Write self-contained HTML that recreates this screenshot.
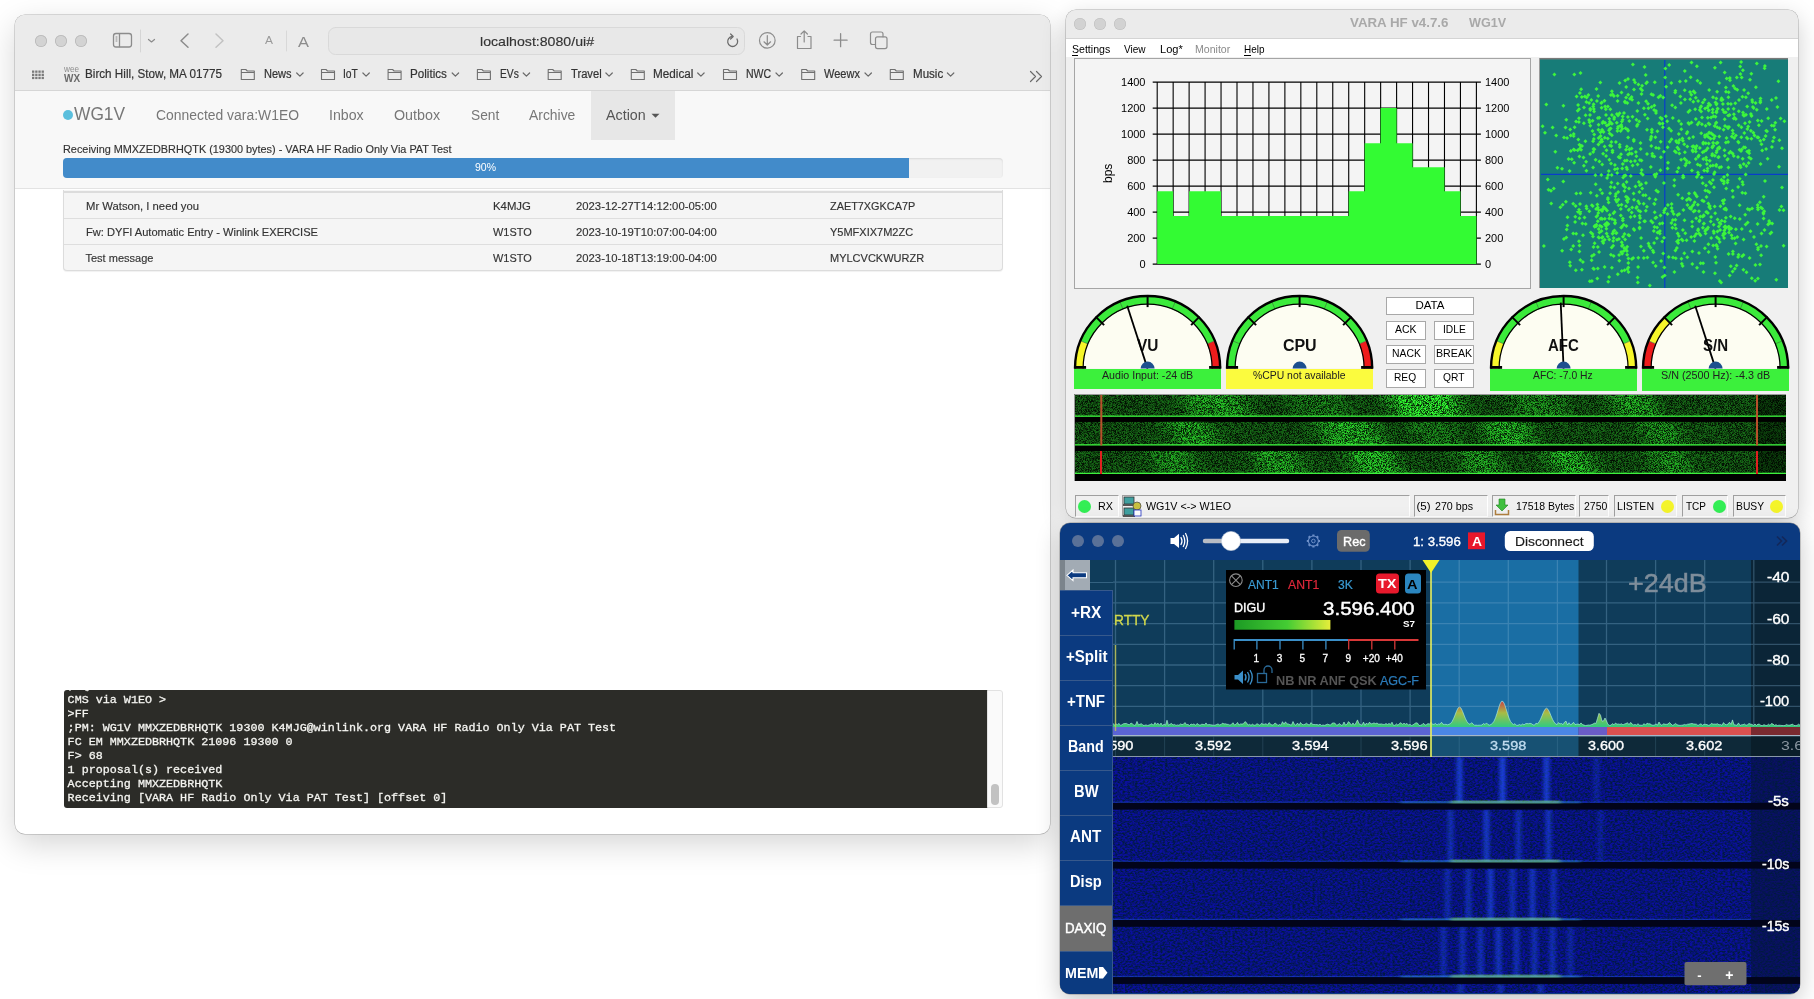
<!DOCTYPE html><html><head><meta charset="utf-8"><style>
html,body{margin:0;padding:0;width:1814px;height:999px;overflow:hidden;background:#fff;font-family:"Liberation Sans",sans-serif}
.b{position:absolute}
.t{position:absolute;white-space:pre;line-height:1;transform-origin:0 0}
</style></head><body><div style="position:absolute;left:0;top:0;width:1814px;height:999px;overflow:hidden;will-change:transform">

<div class="b" style="left:15px;top:14.5px;width:1035px;height:819.5px;border-radius:10px;background:#fff;box-shadow:0 0 0 0.5px rgba(0,0,0,.28),0 10px 32px rgba(0,0,0,.17);overflow:hidden">
</div>
<div class="b" style="left:15px;top:14.5px;width:1035px;height:76.5px;background:#ebebeb;border-radius:10px 10px 0 0;border-bottom:1px solid #d6d6d6;box-sizing:border-box"></div>
<div class="b" style="left:35px;top:35px;width:12px;height:12px;border-radius:50%;background:#d3d3d3;box-shadow:inset 0 0 0 0.8px #b8b8b8"></div>
<div class="b" style="left:55px;top:35px;width:12px;height:12px;border-radius:50%;background:#d3d3d3;box-shadow:inset 0 0 0 0.8px #b8b8b8"></div>
<div class="b" style="left:75px;top:35px;width:12px;height:12px;border-radius:50%;background:#d3d3d3;box-shadow:inset 0 0 0 0.8px #b8b8b8"></div>
<svg class="b" style="left:0;top:0" width="1050" height="90" fill="none" stroke="#8c8c8c" stroke-width="1.3" stroke-linecap="round" stroke-linejoin="round">
<rect x="113.5" y="33.5" width="18" height="13.5" rx="2.5"/>
<line x1="119.5" y1="34" x2="119.5" y2="46.5"/>
<line x1="116" y1="37" x2="117" y2="37" stroke-width="1"/><line x1="116" y1="39" x2="117" y2="39" stroke-width="1"/><line x1="116" y1="41" x2="117" y2="41" stroke-width="1"/>
<line x1="140.5" y1="30" x2="140.5" y2="52" stroke="#d5d5d5" stroke-width="1"/>
<path d="M148.5 39.5 L151.5 42 L154.5 39.5" stroke-width="1.2"/>
<path d="M188 34 L181 40.7 L188 47.3" stroke-width="1.5"/>
<path d="M216 34 L223 40.7 L216 47.3" stroke="#c2c2c2" stroke-width="1.5"/>
<line x1="286.5" y1="31" x2="286.5" y2="51" stroke="#d8d8d8" stroke-width="1"/>
<rect x="328.5" y="27.5" width="416" height="27" rx="7" fill="#e8e8e8" stroke="#d9d9d9" stroke-width="1"/>
<path d="M737 39 A5 5 0 1 1 732.2 36.5" stroke="#6b6b6b" stroke-width="1.3"/>
<path d="M730.6 34 L733.2 36.5 L730.6 39" stroke="#6b6b6b" stroke-width="1.2"/>
<circle cx="767.3" cy="40.4" r="7.8" stroke="#8c8c8c" stroke-width="1.2"/>
<path d="M767.3 35.5 V45 M764 41.8 L767.3 45 L770.6 41.8" stroke-width="1.2"/>
<path d="M800.5 36.5 H797.5 V48.5 H811 V36.5 H808" stroke-width="1.2"/>
<path d="M804.2 42 V30.8 M801 34 L804.2 30.8 L807.4 34" stroke-width="1.2"/>
<path d="M840.6 33.7 V46.7 M834.1 40.2 H847.1" stroke-width="1.3"/>
<rect x="875.5" y="36.8" width="11.5" height="11.8" rx="2" stroke-width="1.2"/>
<path d="M875.5 44.5 H872.5 Q870.5 44.5 870.5 42.5 V34 Q870.5 32 872.5 32 H881 Q883 32 883 34 V36.8" stroke-width="1.2"/>
</svg>
<span class="t" style="left:265.00px;top:35.07px;font-size:11.5px;color:#9a9a9a;transform:scaleX(1.0383);">A</span>
<span class="t" style="left:298.00px;top:33.68px;font-size:15.5px;color:#8c8c8c;transform:scaleX(1.0592);">A</span>
<span class="t" style="left:480.00px;top:34.60px;font-size:13px;color:#333;transform:scaleX(1.0880);-webkit-text-stroke:0.15px #333;">localhost:8080/ui#</span>
<svg class="b" style="left:0;top:0" width="1050" height="90" fill="#7a7a7a"><rect x="32.0" y="70.5" width="2.3" height="2.3"/><rect x="35.2" y="70.5" width="2.3" height="2.3"/><rect x="38.4" y="70.5" width="2.3" height="2.3"/><rect x="41.6" y="70.5" width="2.3" height="2.3"/><rect x="32.0" y="73.7" width="2.3" height="2.3"/><rect x="35.2" y="73.7" width="2.3" height="2.3"/><rect x="38.4" y="73.7" width="2.3" height="2.3"/><rect x="41.6" y="73.7" width="2.3" height="2.3"/><rect x="32.0" y="76.8" width="2.3" height="2.3"/><rect x="35.2" y="76.8" width="2.3" height="2.3"/><rect x="38.4" y="76.8" width="2.3" height="2.3"/><rect x="41.6" y="76.8" width="2.3" height="2.3"/></svg>
<span class="t" style="left:64.04px;top:65.40px;font-size:8.5px;color:#8c8c8c;transform:scaleX(0.9591);">wee</span>
<span class="t" style="left:64.00px;top:73.11px;font-size:10.5px;color:#6a6a6a;font-weight:bold;transform:scaleX(0.9465);">WX</span>
<span class="t" style="left:85.00px;top:68.04px;font-size:12px;color:#333;transform:scaleX(0.9733);-webkit-text-stroke:0.2px #333;">Birch Hill, Stow, MA 01775</span>
<svg class="b" style="left:0;top:0" width="1050" height="90" fill="none" stroke="#707070" stroke-width="1.1" stroke-linejoin="round"><path d="M241.3 69.5 H245.8 L247.3 71 H254.3 V79.5 H241.3 Z M241.3 72.5 H254.3"/><path d="M296.7 73 L299.9 76.2 L303.09999999999997 73" stroke="#6a6a6a" stroke-width="1.2" stroke-linecap="round"/><path d="M321.5 69.5 H326 L327.5 71 H334.5 V79.5 H321.5 Z M321.5 72.5 H334.5"/><path d="M362.9 73 L366.09999999999997 76.2 L369.29999999999995 73" stroke="#6a6a6a" stroke-width="1.2" stroke-linecap="round"/><path d="M388.1 69.5 H392.6 L394.1 71 H401.1 V79.5 H388.1 Z M388.1 72.5 H401.1"/><path d="M452.2 73 L455.4 76.2 L458.59999999999997 73" stroke="#6a6a6a" stroke-width="1.2" stroke-linecap="round"/><path d="M477.4 69.5 H481.9 L483.4 71 H490.4 V79.5 H477.4 Z M477.4 72.5 H490.4"/><path d="M523.2 73 L526.4000000000001 76.2 L529.6 73" stroke="#6a6a6a" stroke-width="1.2" stroke-linecap="round"/><path d="M548.2 69.5 H552.7 L554.2 71 H561.2 V79.5 H548.2 Z M548.2 72.5 H561.2"/><path d="M605.9 73 L609.1 76.2 L612.3 73" stroke="#6a6a6a" stroke-width="1.2" stroke-linecap="round"/><path d="M631.3 69.5 H635.8 L637.3 71 H644.3 V79.5 H631.3 Z M631.3 72.5 H644.3"/><path d="M697.7 73 L700.9000000000001 76.2 L704.1 73" stroke="#6a6a6a" stroke-width="1.2" stroke-linecap="round"/><path d="M723.5 69.5 H728 L729.5 71 H736.5 V79.5 H723.5 Z M723.5 72.5 H736.5"/><path d="M776 73 L779.2 76.2 L782.4 73" stroke="#6a6a6a" stroke-width="1.2" stroke-linecap="round"/><path d="M801.7 69.5 H806.2 L807.7 71 H814.7 V79.5 H801.7 Z M801.7 72.5 H814.7"/><path d="M865 73 L868.2 76.2 L871.4 73" stroke="#6a6a6a" stroke-width="1.2" stroke-linecap="round"/><path d="M890.3 69.5 H894.8 L896.3 71 H903.3 V79.5 H890.3 Z M890.3 72.5 H903.3"/><path d="M947.4 73 L950.6 76.2 L953.8 73" stroke="#6a6a6a" stroke-width="1.2" stroke-linecap="round"/><path d="M1030.5 71.5 L1035.5 76.5 L1030.5 81.5 M1036.5 71.5 L1041.5 76.5 L1036.5 81.5" stroke="#6a6a6a" stroke-width="1.2" stroke-linecap="round"/></svg>
<span class="t" style="left:263.60px;top:68.04px;font-size:12px;color:#333;transform:scaleX(0.9200);-webkit-text-stroke:0.2px #333;">News</span>
<span class="t" style="left:343.10px;top:68.04px;font-size:12px;color:#333;transform:scaleX(0.8593);-webkit-text-stroke:0.2px #333;">IoT</span>
<span class="t" style="left:410.30px;top:68.04px;font-size:12px;color:#333;transform:scaleX(0.9700);-webkit-text-stroke:0.2px #333;">Politics</span>
<span class="t" style="left:499.60px;top:68.04px;font-size:12px;color:#333;transform:scaleX(0.8538);-webkit-text-stroke:0.2px #333;">EVs</span>
<span class="t" style="left:570.90px;top:68.04px;font-size:12px;color:#333;transform:scaleX(0.9307);-webkit-text-stroke:0.2px #333;">Travel</span>
<span class="t" style="left:653.30px;top:68.04px;font-size:12px;color:#333;transform:scaleX(0.9773);-webkit-text-stroke:0.2px #333;">Medical</span>
<span class="t" style="left:745.80px;top:68.04px;font-size:12px;color:#333;transform:scaleX(0.8787);-webkit-text-stroke:0.2px #333;">NWC</span>
<span class="t" style="left:824.00px;top:68.04px;font-size:12px;color:#333;transform:scaleX(0.9177);-webkit-text-stroke:0.2px #333;">Weewx</span>
<span class="t" style="left:912.50px;top:68.04px;font-size:12px;color:#333;transform:scaleX(0.9642);-webkit-text-stroke:0.2px #333;">Music</span>
<div class="b" style="left:15px;top:91px;width:1035px;height:98px;background:#f8f8f8;border-bottom:1px solid #e3e3e3;box-sizing:border-box"></div>
<div class="b" style="left:591px;top:91px;width:84px;height:48.5px;background:#e7e7e7"></div>
<div class="b" style="left:63px;top:110.3px;width:10px;height:10px;border-radius:50%;background:#5bbfdd"></div>
<span class="t" style="left:73.90px;top:105.46px;font-size:18px;color:#777;transform:scaleX(0.9640);">WG1V</span>
<span class="t" style="left:155.70px;top:108.05px;font-size:14px;color:#777;transform:scaleX(0.9931);">Connected vara:W1EO</span>
<span class="t" style="left:329.30px;top:108.05px;font-size:14px;color:#777;transform:scaleX(1.0137);">Inbox</span>
<span class="t" style="left:394.40px;top:108.05px;font-size:14px;color:#777;transform:scaleX(1.0210);">Outbox</span>
<span class="t" style="left:470.90px;top:108.05px;font-size:14px;color:#777;transform:scaleX(0.9802);">Sent</span>
<span class="t" style="left:529.30px;top:108.05px;font-size:14px;color:#777;transform:scaleX(0.9916);">Archive</span>
<span class="t" style="left:605.80px;top:108.05px;font-size:14px;color:#555;transform:scaleX(1.0200);">Action</span>
<svg class="b" style="left:651px;top:113px" width="10" height="6"><path d="M0.5 0.8 H8.5 L4.5 4.8Z" fill="#555"/></svg>
<span class="t" style="left:62.50px;top:144.49px;font-size:11px;color:#333;transform:scaleX(0.9883);-webkit-text-stroke:0.15px #333;">Receiving MMXZEDBRHQTK (19300 bytes) - VARA HF Radio Only Via PAT Test</span>
<div class="b" style="left:63px;top:158.3px;width:940px;height:19.299999999999983px;background:#f1f1f1;border-radius:4px;box-shadow:inset 0 1px 2px rgba(0,0,0,.1)"></div>
<div class="b" style="left:63px;top:158.3px;width:846px;height:19.299999999999983px;background:#428bca;border-radius:4px 0 0 4px"></div>
<span class="t" style="left:474.50px;top:162.19px;font-size:11px;color:#fff;transform:scaleX(0.9545);">90%</span>
<div class="b" style="left:63px;top:190px;width:940px;height:81px;background:#f5f5f5;box-sizing:border-box;border:1px solid #dcdcdc;border-top:none;border-radius:0 0 4px 4px;box-shadow:0 1px 1px rgba(0,0,0,.06)"></div>
<div class="b" style="left:64px;top:190.5px;width:938px;height:2.0px;background:#dcdcdc"></div>
<div class="b" style="left:64px;top:218px;width:938px;height:1px;background:#dedede"></div>
<div class="b" style="left:64px;top:244px;width:938px;height:1px;background:#dedede"></div>
<span class="t" style="left:85.50px;top:200.99px;font-size:11px;color:#333;transform:scaleX(1.0247);-webkit-text-stroke:0.15px #333;">Mr Watson, I need you</span>
<span class="t" style="left:493.10px;top:200.99px;font-size:11px;color:#333;transform:scaleX(1.0331);-webkit-text-stroke:0.15px #333;">K4MJG</span>
<span class="t" style="left:575.70px;top:200.99px;font-size:11px;color:#333;transform:scaleX(1.0270);-webkit-text-stroke:0.15px #333;">2023-12-27T14:12:00-05:00</span>
<span class="t" style="left:830.00px;top:200.99px;font-size:11px;color:#333;transform:scaleX(0.9886);-webkit-text-stroke:0.15px #333;">ZAET7XGKCA7P</span>
<span class="t" style="left:85.50px;top:226.89px;font-size:11px;color:#333;transform:scaleX(1.0094);-webkit-text-stroke:0.15px #333;">Fw: DYFI Automatic Entry - Winlink EXERCISE</span>
<span class="t" style="left:493.10px;top:226.89px;font-size:11px;color:#333;transform:scaleX(0.9938);-webkit-text-stroke:0.15px #333;">W1STO</span>
<span class="t" style="left:575.70px;top:226.89px;font-size:11px;color:#333;transform:scaleX(1.0270);-webkit-text-stroke:0.15px #333;">2023-10-19T10:07:00-04:00</span>
<span class="t" style="left:830.00px;top:226.89px;font-size:11px;color:#333;-webkit-text-stroke:0.15px #333;">Y5MFXIX7M2ZC</span>
<span class="t" style="left:85.50px;top:253.09px;font-size:11px;color:#333;-webkit-text-stroke:0.15px #333;">Test message</span>
<span class="t" style="left:493.10px;top:253.09px;font-size:11px;color:#333;transform:scaleX(0.9938);-webkit-text-stroke:0.15px #333;">W1STO</span>
<span class="t" style="left:575.70px;top:253.09px;font-size:11px;color:#333;transform:scaleX(1.0270);-webkit-text-stroke:0.15px #333;">2023-10-18T13:19:00-04:00</span>
<span class="t" style="left:830.00px;top:253.09px;font-size:11px;color:#333;-webkit-text-stroke:0.15px #333;">MYLCVCKWURZR</span>
<div class="b" style="left:64px;top:690px;width:924px;height:118px;background:#2c2c28;border-radius:3px 0 0 3px"></div>
<div class="b" style="left:987px;top:690px;width:16px;height:118px;background:#fafafa;border:1px solid #e2e2e2;box-sizing:border-box;border-radius:0 3px 3px 0"></div>
<div class="b" style="left:991px;top:784px;width:8px;height:21px;background:#c2c2c2;border-radius:4px"></div>
<div class="b" style="left:64px;top:690px;width:923px;height:118px;overflow:hidden"><span class="t" style="left:3.60px;top:-9.28px;font-size:11.72px;color:#f4f4f0;font-family:'Liberation Mono',monospace;-webkit-text-stroke:0.3px #f4f4f0;">;PQ: 23753882</span><span class="t" style="left:3.60px;top:4.72px;font-size:11.72px;color:#f4f4f0;font-family:'Liberation Mono',monospace;-webkit-text-stroke:0.3px #f4f4f0;">CMS via W1EO &gt;</span><span class="t" style="left:3.60px;top:18.72px;font-size:11.72px;color:#f4f4f0;font-family:'Liberation Mono',monospace;-webkit-text-stroke:0.3px #f4f4f0;">&gt;FF</span><span class="t" style="left:3.60px;top:32.72px;font-size:11.72px;color:#f4f4f0;font-family:'Liberation Mono',monospace;-webkit-text-stroke:0.3px #f4f4f0;">;PM: WG1V MMXZEDBRHQTK 19300 K4MJG@winlink.org VARA HF Radio Only Via PAT Test</span><span class="t" style="left:3.60px;top:46.72px;font-size:11.72px;color:#f4f4f0;font-family:'Liberation Mono',monospace;-webkit-text-stroke:0.3px #f4f4f0;">FC EM MMXZEDBRHQTK 21096 19300 0</span><span class="t" style="left:3.60px;top:60.72px;font-size:11.72px;color:#f4f4f0;font-family:'Liberation Mono',monospace;-webkit-text-stroke:0.3px #f4f4f0;">F&gt; 68</span><span class="t" style="left:3.60px;top:74.72px;font-size:11.72px;color:#f4f4f0;font-family:'Liberation Mono',monospace;-webkit-text-stroke:0.3px #f4f4f0;">1 proposal(s) received</span><span class="t" style="left:3.60px;top:88.72px;font-size:11.72px;color:#f4f4f0;font-family:'Liberation Mono',monospace;-webkit-text-stroke:0.3px #f4f4f0;">Accepting MMXZEDBRHQTK</span><span class="t" style="left:3.60px;top:102.72px;font-size:11.72px;color:#f4f4f0;font-family:'Liberation Mono',monospace;-webkit-text-stroke:0.3px #f4f4f0;">Receiving [VARA HF Radio Only Via PAT Test] [offset 0]</span></div>
<div class="b" style="left:1066px;top:9.5px;width:732px;height:508px;border-radius:10px;background:#f0f0f0;box-shadow:0 0 0 0.5px rgba(0,0,0,.3),0 8px 24px rgba(0,0,0,.2);overflow:hidden"><div class="b" style="left:0;top:0;width:732px;height:28.5px;background:#ebebeb;border-bottom:1px solid #d4d4d4"></div><div class="b" style="left:0;top:29.5px;width:732px;height:18px;background:#fff"></div></div>
<div class="b" style="left:1074px;top:18px;width:12px;height:12px;border-radius:50%;background:#d2d2d2;box-shadow:inset 0 0 0 0.5px #bcbcbc"></div>
<div class="b" style="left:1094px;top:18px;width:12px;height:12px;border-radius:50%;background:#d2d2d2;box-shadow:inset 0 0 0 0.5px #bcbcbc"></div>
<div class="b" style="left:1114px;top:18px;width:12px;height:12px;border-radius:50%;background:#d2d2d2;box-shadow:inset 0 0 0 0.5px #bcbcbc"></div>
<span class="t" style="left:1349.60px;top:17.32px;font-size:12.5px;color:#a9a9a9;font-weight:bold;transform:scaleX(1.0652);">VARA HF v4.7.6</span>
<span class="t" style="left:1468.70px;top:17.32px;font-size:12.5px;color:#a9a9a9;font-weight:bold;transform:scaleX(1.0105);">WG1V</span>
<span class="t" style="left:1071.80px;top:43.79px;font-size:11px;color:#000;transform:scaleX(0.9606);">Settings</span>
<span class="t" style="left:1123.70px;top:43.79px;font-size:11px;color:#000;transform:scaleX(0.9133);">View</span>
<span class="t" style="left:1159.50px;top:43.79px;font-size:11px;color:#000;transform:scaleX(1.0062);">Log*</span>
<span class="t" style="left:1194.60px;top:43.79px;font-size:11px;color:#8a8a8a;transform:scaleX(0.9595);">Monitor</span>
<span class="t" style="left:1243.70px;top:43.79px;font-size:11px;color:#000;transform:scaleX(0.9025);">Help</span>
<div class="b" style="left:1072px;top:54.5px;width:6px;height:1.0px;background:#000"></div>
<div class="b" style="left:1244px;top:54.5px;width:7px;height:1.0px;background:#000"></div>
<div class="b" style="left:1074px;top:58px;width:457px;height:231px;background:#f4f4f4;border:1px solid #a5a5a5;box-sizing:border-box"></div>
<svg class="b" style="left:1074px;top:58px" width="457" height="231" viewBox="1074 58 457 231"><path d="M1157.20 82.1 V264.10 M1173.16 82.1 V264.10 M1189.12 82.1 V264.10 M1205.08 82.1 V264.10 M1221.04 82.1 V264.10 M1237.00 82.1 V264.10 M1252.96 82.1 V264.10 M1268.92 82.1 V264.10 M1284.88 82.1 V264.10 M1300.84 82.1 V264.10 M1316.80 82.1 V264.10 M1332.76 82.1 V264.10 M1348.72 82.1 V264.10 M1364.68 82.1 V264.10 M1380.64 82.1 V264.10 M1396.60 82.1 V264.10 M1412.56 82.1 V264.10 M1428.52 82.1 V264.10 M1444.48 82.1 V264.10 M1460.44 82.1 V264.10 M1476.40 82.1 V264.10 M1152.7 82.10 H1480.90 M1152.7 108.10 H1480.90 M1152.7 134.10 H1480.90 M1152.7 160.10 H1480.90 M1152.7 186.10 H1480.90 M1152.7 212.10 H1480.90 M1152.7 238.10 H1480.90 M1152.7 264.10 H1480.90 " stroke="#000" stroke-width="1.1" fill="none"/><path d="M1157.20 264.10 V191.30 H1173.16 V216.00 H1189.12 V191.30 H1205.08 V191.30 H1221.04 V216.00 H1237.00 V216.00 H1252.96 V216.00 H1268.92 V216.00 H1284.88 V216.00 H1300.84 V216.00 H1316.80 V216.00 H1332.76 V216.00 H1348.72 V191.30 H1364.68 V143.20 H1380.64 V108.10 H1396.60 V143.20 H1412.56 V167.25 H1428.52 V167.25 H1444.48 V191.30 H1460.44 V216.00 H1476.40 V264.10Z" fill="#33fb33"/></svg>
<span class="t" style="left:1121.03px;top:76.69px;font-size:11px;color:#000;">1400</span>
<span class="t" style="left:1485.00px;top:76.69px;font-size:11px;color:#000;">1400</span>
<span class="t" style="left:1121.03px;top:102.69px;font-size:11px;color:#000;">1200</span>
<span class="t" style="left:1485.00px;top:102.69px;font-size:11px;color:#000;">1200</span>
<span class="t" style="left:1121.03px;top:128.69px;font-size:11px;color:#000;">1000</span>
<span class="t" style="left:1485.00px;top:128.69px;font-size:11px;color:#000;">1000</span>
<span class="t" style="left:1127.13px;top:154.69px;font-size:11px;color:#000;">800</span>
<span class="t" style="left:1485.00px;top:154.69px;font-size:11px;color:#000;">800</span>
<span class="t" style="left:1127.13px;top:180.69px;font-size:11px;color:#000;">600</span>
<span class="t" style="left:1485.00px;top:180.69px;font-size:11px;color:#000;">600</span>
<span class="t" style="left:1127.13px;top:206.69px;font-size:11px;color:#000;">400</span>
<span class="t" style="left:1485.00px;top:206.69px;font-size:11px;color:#000;">400</span>
<span class="t" style="left:1127.13px;top:232.69px;font-size:11px;color:#000;">200</span>
<span class="t" style="left:1485.00px;top:232.69px;font-size:11px;color:#000;">200</span>
<span class="t" style="left:1139.39px;top:258.69px;font-size:11px;color:#000;">0</span>
<span class="t" style="left:1485.00px;top:258.69px;font-size:11px;color:#000;">0</span>
<span class="t" style="left:1101.70px;top:183.04px;font-size:12px;color:#000;transform:rotate(-90deg);transform-origin:0 0;">bps</span>
<svg class="b" style="left:1539px;top:58px" width="249" height="230"><rect x="0" y="0" width="249" height="230" fill="#177c78"/><path d="M0 0.8 H249" stroke="#7a7a7a" stroke-width="1.6"/><path d="M0.5 0 V230" stroke="#9a9a9a" stroke-width="1"/><path d="M125.8 2 V230 M2 116.4 H249" stroke="#0a3ccc" stroke-width="1.2"/><path d="M170.1 72.4l2 2l-2 2l-2-2zM14.8 128.6l2 2l-2 2l-2-2zM101.5 83.0l2 2l-2 2l-2-2zM63.5 63.0l2 2l-2 2l-2-2zM45.9 36.4l2 2l-2 2l-2-2zM94.7 169.1l2 2l-2 2l-2-2zM40.0 181.2l2 2l-2 2l-2-2zM210.0 90.7l2 2l-2 2l-2-2zM113.8 190.5l2 2l-2 2l-2-2zM35.6 67.3l2 2l-2 2l-2-2zM148.5 145.0l2 2l-2 2l-2-2zM191.0 20.2l2 2l-2 2l-2-2zM40.0 49.3l2 2l-2 2l-2-2zM88.2 186.8l2 2l-2 2l-2-2zM222.5 173.6l2 2l-2 2l-2-2zM163.8 123.2l2 2l-2 2l-2-2zM217.8 3.4l2 2l-2 2l-2-2zM222.5 84.3l2 2l-2 2l-2-2zM164.3 99.1l2 2l-2 2l-2-2zM204.9 55.8l2 2l-2 2l-2-2zM123.2 181.6l2 2l-2 2l-2-2zM18.4 107.8l2 2l-2 2l-2-2zM193.6 93.6l2 2l-2 2l-2-2zM203.9 10.3l2 2l-2 2l-2-2zM224.6 158.4l2 2l-2 2l-2-2zM189.1 82.1l2 2l-2 2l-2-2zM132.1 70.8l2 2l-2 2l-2-2zM70.3 179.4l2 2l-2 2l-2-2zM223.2 148.6l2 2l-2 2l-2-2zM117.3 130.6l2 2l-2 2l-2-2zM166.1 171.0l2 2l-2 2l-2-2zM210.5 149.8l2 2l-2 2l-2-2zM210.2 93.2l2 2l-2 2l-2-2zM38.7 50.7l2 2l-2 2l-2-2zM196.9 75.5l2 2l-2 2l-2-2zM126.4 8.6l2 2l-2 2l-2-2zM221.0 204.4l2 2l-2 2l-2-2zM164.7 163.7l2 2l-2 2l-2-2zM71.7 127.1l2 2l-2 2l-2-2zM95.0 139.8l2 2l-2 2l-2-2zM152.5 2.5l2 2l-2 2l-2-2zM169.8 43.6l2 2l-2 2l-2-2zM164.2 83.7l2 2l-2 2l-2-2zM136.4 30.7l2 2l-2 2l-2-2zM95.0 20.1l2 2l-2 2l-2-2zM44.9 63.2l2 2l-2 2l-2-2zM82.5 32.5l2 2l-2 2l-2-2zM4.9 186.1l2 2l-2 2l-2-2zM190.4 169.4l2 2l-2 2l-2-2zM159.2 96.7l2 2l-2 2l-2-2zM97.8 147.0l2 2l-2 2l-2-2zM119.5 37.3l2 2l-2 2l-2-2zM99.1 141.2l2 2l-2 2l-2-2zM116.7 206.0l2 2l-2 2l-2-2zM81.1 66.1l2 2l-2 2l-2-2zM145.9 39.5l2 2l-2 2l-2-2zM199.6 194.8l2 2l-2 2l-2-2zM89.0 18.9l2 2l-2 2l-2-2zM16.3 91.8l2 2l-2 2l-2-2zM73.5 92.2l2 2l-2 2l-2-2zM71.9 194.7l2 2l-2 2l-2-2zM98.3 50.9l2 2l-2 2l-2-2zM207.4 106.1l2 2l-2 2l-2-2zM67.8 65.5l2 2l-2 2l-2-2zM136.2 32.6l2 2l-2 2l-2-2zM100.9 99.9l2 2l-2 2l-2-2zM56.6 99.7l2 2l-2 2l-2-2zM185.7 59.3l2 2l-2 2l-2-2zM87.4 166.1l2 2l-2 2l-2-2zM149.8 138.5l2 2l-2 2l-2-2zM37.2 173.7l2 2l-2 2l-2-2zM157.9 6.2l2 2l-2 2l-2-2zM186.8 52.2l2 2l-2 2l-2-2zM62.6 166.7l2 2l-2 2l-2-2zM115.1 182.9l2 2l-2 2l-2-2zM115.1 49.9l2 2l-2 2l-2-2zM177.5 83.2l2 2l-2 2l-2-2zM177.5 52.6l2 2l-2 2l-2-2zM236.3 62.7l2 2l-2 2l-2-2zM105.3 161.2l2 2l-2 2l-2-2zM169.3 77.1l2 2l-2 2l-2-2zM159.8 95.6l2 2l-2 2l-2-2zM52.6 200.2l2 2l-2 2l-2-2zM128.2 61.3l2 2l-2 2l-2-2zM72.9 75.2l2 2l-2 2l-2-2zM75.9 105.0l2 2l-2 2l-2-2zM218.9 218.5l2 2l-2 2l-2-2zM186.8 168.1l2 2l-2 2l-2-2zM93.2 147.4l2 2l-2 2l-2-2zM77.9 54.1l2 2l-2 2l-2-2zM72.4 82.1l2 2l-2 2l-2-2zM106.0 161.2l2 2l-2 2l-2-2zM224.8 79.5l2 2l-2 2l-2-2zM72.3 85.9l2 2l-2 2l-2-2zM157.2 158.3l2 2l-2 2l-2-2zM170.6 121.9l2 2l-2 2l-2-2zM228.0 71.3l2 2l-2 2l-2-2zM74.7 196.1l2 2l-2 2l-2-2zM115.5 143.9l2 2l-2 2l-2-2zM206.0 63.3l2 2l-2 2l-2-2zM161.4 156.6l2 2l-2 2l-2-2zM119.8 88.3l2 2l-2 2l-2-2zM184.6 173.5l2 2l-2 2l-2-2zM139.1 134.7l2 2l-2 2l-2-2zM83.5 184.9l2 2l-2 2l-2-2zM55.6 183.3l2 2l-2 2l-2-2zM240.4 80.2l2 2l-2 2l-2-2zM85.3 188.0l2 2l-2 2l-2-2zM65.6 206.9l2 2l-2 2l-2-2zM121.9 97.3l2 2l-2 2l-2-2zM47.3 146.3l2 2l-2 2l-2-2zM168.9 152.9l2 2l-2 2l-2-2zM78.2 113.1l2 2l-2 2l-2-2zM168.6 108.5l2 2l-2 2l-2-2zM96.1 22.6l2 2l-2 2l-2-2zM221.5 38.6l2 2l-2 2l-2-2zM81.6 71.0l2 2l-2 2l-2-2zM153.5 90.2l2 2l-2 2l-2-2zM40.9 33.0l2 2l-2 2l-2-2zM233.2 163.6l2 2l-2 2l-2-2zM72.9 31.3l2 2l-2 2l-2-2zM78.8 214.3l2 2l-2 2l-2-2zM43.4 163.6l2 2l-2 2l-2-2zM182.4 119.7l2 2l-2 2l-2-2zM51.3 50.1l2 2l-2 2l-2-2zM188.7 67.3l2 2l-2 2l-2-2zM161.3 22.9l2 2l-2 2l-2-2zM143.9 170.1l2 2l-2 2l-2-2zM68.8 78.6l2 2l-2 2l-2-2zM174.8 78.4l2 2l-2 2l-2-2zM125.4 207.5l2 2l-2 2l-2-2zM58.9 58.0l2 2l-2 2l-2-2zM216.4 204.9l2 2l-2 2l-2-2zM171.3 44.9l2 2l-2 2l-2-2zM180.4 162.8l2 2l-2 2l-2-2zM136.4 190.4l2 2l-2 2l-2-2zM166.6 173.5l2 2l-2 2l-2-2zM165.1 91.5l2 2l-2 2l-2-2zM196.8 58.9l2 2l-2 2l-2-2zM73.6 173.8l2 2l-2 2l-2-2zM156.8 91.6l2 2l-2 2l-2-2zM175.9 76.3l2 2l-2 2l-2-2zM177.9 90.8l2 2l-2 2l-2-2zM185.7 12.6l2 2l-2 2l-2-2zM194.4 25.9l2 2l-2 2l-2-2zM121.7 81.8l2 2l-2 2l-2-2zM162.1 46.3l2 2l-2 2l-2-2zM89.1 94.6l2 2l-2 2l-2-2zM176.0 213.2l2 2l-2 2l-2-2zM163.2 140.6l2 2l-2 2l-2-2zM186.9 82.4l2 2l-2 2l-2-2zM41.4 151.8l2 2l-2 2l-2-2zM142.7 179.6l2 2l-2 2l-2-2zM91.8 101.6l2 2l-2 2l-2-2zM139.6 108.0l2 2l-2 2l-2-2zM73.7 34.4l2 2l-2 2l-2-2zM157.7 86.1l2 2l-2 2l-2-2zM129.0 102.7l2 2l-2 2l-2-2zM157.7 136.3l2 2l-2 2l-2-2zM200.5 89.8l2 2l-2 2l-2-2zM208.7 162.4l2 2l-2 2l-2-2zM177.9 177.3l2 2l-2 2l-2-2zM27.3 59.8l2 2l-2 2l-2-2zM169.5 63.6l2 2l-2 2l-2-2zM66.0 62.8l2 2l-2 2l-2-2zM151.2 39.3l2 2l-2 2l-2-2zM199.1 81.7l2 2l-2 2l-2-2zM70.1 217.1l2 2l-2 2l-2-2zM138.2 111.7l2 2l-2 2l-2-2zM170.6 64.2l2 2l-2 2l-2-2zM196.9 169.3l2 2l-2 2l-2-2zM175.7 112.3l2 2l-2 2l-2-2zM130.0 68.5l2 2l-2 2l-2-2zM169.3 143.6l2 2l-2 2l-2-2zM200.6 145.2l2 2l-2 2l-2-2zM180.4 88.2l2 2l-2 2l-2-2zM212.4 55.6l2 2l-2 2l-2-2zM6.0 72.8l2 2l-2 2l-2-2zM82.9 61.5l2 2l-2 2l-2-2zM31.8 91.1l2 2l-2 2l-2-2zM27.3 177.6l2 2l-2 2l-2-2zM206.4 133.2l2 2l-2 2l-2-2zM158.9 112.5l2 2l-2 2l-2-2zM163.9 167.7l2 2l-2 2l-2-2zM102.1 178.1l2 2l-2 2l-2-2zM35.1 102.7l2 2l-2 2l-2-2zM219.1 187.8l2 2l-2 2l-2-2zM41.2 153.7l2 2l-2 2l-2-2zM175.0 127.3l2 2l-2 2l-2-2zM197.8 17.5l2 2l-2 2l-2-2zM84.7 164.8l2 2l-2 2l-2-2zM77.6 172.9l2 2l-2 2l-2-2zM72.7 115.0l2 2l-2 2l-2-2zM229.8 163.6l2 2l-2 2l-2-2zM80.6 53.3l2 2l-2 2l-2-2zM194.8 95.9l2 2l-2 2l-2-2zM195.5 57.8l2 2l-2 2l-2-2zM156.2 49.2l2 2l-2 2l-2-2zM142.8 203.7l2 2l-2 2l-2-2zM59.6 77.9l2 2l-2 2l-2-2zM156.8 37.7l2 2l-2 2l-2-2zM241.6 58.4l2 2l-2 2l-2-2zM58.8 147.5l2 2l-2 2l-2-2zM96.9 92.0l2 2l-2 2l-2-2zM78.6 41.0l2 2l-2 2l-2-2zM142.4 198.7l2 2l-2 2l-2-2zM74.2 185.7l2 2l-2 2l-2-2zM104.2 135.3l2 2l-2 2l-2-2zM100.8 125.3l2 2l-2 2l-2-2zM17.2 75.5l2 2l-2 2l-2-2zM202.8 168.9l2 2l-2 2l-2-2zM104.7 143.8l2 2l-2 2l-2-2zM30.6 111.1l2 2l-2 2l-2-2zM185.0 117.1l2 2l-2 2l-2-2zM42.1 29.3l2 2l-2 2l-2-2zM205.3 73.0l2 2l-2 2l-2-2zM82.5 66.4l2 2l-2 2l-2-2zM87.1 37.5l2 2l-2 2l-2-2zM168.8 57.8l2 2l-2 2l-2-2zM63.1 159.1l2 2l-2 2l-2-2zM64.6 147.0l2 2l-2 2l-2-2zM54.1 81.2l2 2l-2 2l-2-2zM169.0 167.4l2 2l-2 2l-2-2zM124.2 193.5l2 2l-2 2l-2-2zM153.4 86.4l2 2l-2 2l-2-2zM100.3 143.5l2 2l-2 2l-2-2zM47.7 148.5l2 2l-2 2l-2-2zM112.9 70.1l2 2l-2 2l-2-2zM114.1 35.0l2 2l-2 2l-2-2zM63.2 81.4l2 2l-2 2l-2-2zM101.7 89.1l2 2l-2 2l-2-2zM125.7 215.4l2 2l-2 2l-2-2zM244.6 185.7l2 2l-2 2l-2-2zM213.4 42.0l2 2l-2 2l-2-2zM42.8 36.9l2 2l-2 2l-2-2zM82.7 182.2l2 2l-2 2l-2-2zM166.0 77.0l2 2l-2 2l-2-2zM112.3 76.6l2 2l-2 2l-2-2zM104.8 190.7l2 2l-2 2l-2-2zM169.4 184.3l2 2l-2 2l-2-2zM146.3 173.3l2 2l-2 2l-2-2zM47.4 42.0l2 2l-2 2l-2-2zM78.4 108.7l2 2l-2 2l-2-2zM189.4 37.3l2 2l-2 2l-2-2zM55.2 89.3l2 2l-2 2l-2-2zM193.6 70.5l2 2l-2 2l-2-2zM212.4 78.7l2 2l-2 2l-2-2zM189.1 68.3l2 2l-2 2l-2-2zM117.5 113.9l2 2l-2 2l-2-2zM158.5 20.8l2 2l-2 2l-2-2zM95.0 29.5l2 2l-2 2l-2-2zM158.7 104.6l2 2l-2 2l-2-2zM175.7 146.4l2 2l-2 2l-2-2zM141.9 43.0l2 2l-2 2l-2-2zM59.5 177.2l2 2l-2 2l-2-2zM161.4 47.5l2 2l-2 2l-2-2zM204.4 209.8l2 2l-2 2l-2-2zM54.6 44.3l2 2l-2 2l-2-2zM177.3 104.8l2 2l-2 2l-2-2zM67.6 173.6l2 2l-2 2l-2-2zM15.4 14.6l2 2l-2 2l-2-2zM177.4 44.5l2 2l-2 2l-2-2zM152.2 177.0l2 2l-2 2l-2-2zM31.2 69.5l2 2l-2 2l-2-2zM111.6 79.8l2 2l-2 2l-2-2zM139.9 60.9l2 2l-2 2l-2-2zM160.0 151.3l2 2l-2 2l-2-2zM226.0 120.9l2 2l-2 2l-2-2zM63.1 69.8l2 2l-2 2l-2-2zM54.0 176.4l2 2l-2 2l-2-2zM49.4 34.9l2 2l-2 2l-2-2zM147.8 140.0l2 2l-2 2l-2-2zM178.2 67.2l2 2l-2 2l-2-2zM54.8 79.1l2 2l-2 2l-2-2zM112.9 69.4l2 2l-2 2l-2-2zM41.8 85.8l2 2l-2 2l-2-2zM166.6 65.8l2 2l-2 2l-2-2zM73.0 159.0l2 2l-2 2l-2-2zM217.4 184.3l2 2l-2 2l-2-2zM97.9 65.9l2 2l-2 2l-2-2zM47.4 110.7l2 2l-2 2l-2-2zM173.9 105.6l2 2l-2 2l-2-2zM77.8 62.7l2 2l-2 2l-2-2zM189.2 48.9l2 2l-2 2l-2-2zM84.8 191.1l2 2l-2 2l-2-2zM110.4 138.4l2 2l-2 2l-2-2zM203.4 121.9l2 2l-2 2l-2-2zM95.6 156.2l2 2l-2 2l-2-2zM145.9 92.3l2 2l-2 2l-2-2zM88.6 69.5l2 2l-2 2l-2-2zM121.5 155.6l2 2l-2 2l-2-2zM102.5 100.4l2 2l-2 2l-2-2zM72.9 55.0l2 2l-2 2l-2-2zM201.4 14.1l2 2l-2 2l-2-2zM90.3 175.5l2 2l-2 2l-2-2zM132.5 79.3l2 2l-2 2l-2-2zM57.4 164.8l2 2l-2 2l-2-2zM60.1 191.9l2 2l-2 2l-2-2zM72.7 187.6l2 2l-2 2l-2-2zM182.9 120.6l2 2l-2 2l-2-2zM172.1 157.1l2 2l-2 2l-2-2zM128.6 87.2l2 2l-2 2l-2-2zM167.0 125.4l2 2l-2 2l-2-2zM51.0 54.9l2 2l-2 2l-2-2zM152.5 62.6l2 2l-2 2l-2-2zM65.8 77.8l2 2l-2 2l-2-2zM8.8 119.6l2 2l-2 2l-2-2zM173.3 87.5l2 2l-2 2l-2-2zM110.8 225.6l2 2l-2 2l-2-2zM85.1 115.8l2 2l-2 2l-2-2zM54.5 187.1l2 2l-2 2l-2-2zM138.4 87.4l2 2l-2 2l-2-2zM167.1 97.4l2 2l-2 2l-2-2zM117.3 157.6l2 2l-2 2l-2-2zM126.9 56.2l2 2l-2 2l-2-2zM41.0 143.9l2 2l-2 2l-2-2zM193.9 191.6l2 2l-2 2l-2-2zM202.0 91.0l2 2l-2 2l-2-2zM68.1 118.1l2 2l-2 2l-2-2zM122.9 58.6l2 2l-2 2l-2-2zM184.5 143.5l2 2l-2 2l-2-2zM201.0 105.4l2 2l-2 2l-2-2zM84.0 176.7l2 2l-2 2l-2-2zM159.0 170.5l2 2l-2 2l-2-2zM82.1 192.0l2 2l-2 2l-2-2zM29.6 98.9l2 2l-2 2l-2-2zM57.1 166.3l2 2l-2 2l-2-2zM203.9 124.5l2 2l-2 2l-2-2zM52.3 39.9l2 2l-2 2l-2-2zM168.1 152.2l2 2l-2 2l-2-2zM187.7 18.4l2 2l-2 2l-2-2zM94.6 133.5l2 2l-2 2l-2-2zM28.5 157.2l2 2l-2 2l-2-2zM79.2 132.1l2 2l-2 2l-2-2zM215.5 75.6l2 2l-2 2l-2-2zM59.6 64.7l2 2l-2 2l-2-2zM170.2 30.0l2 2l-2 2l-2-2zM114.1 202.6l2 2l-2 2l-2-2zM32.8 99.3l2 2l-2 2l-2-2zM58.4 144.4l2 2l-2 2l-2-2zM189.2 167.0l2 2l-2 2l-2-2zM164.7 155.2l2 2l-2 2l-2-2zM213.1 148.4l2 2l-2 2l-2-2zM55.7 166.8l2 2l-2 2l-2-2zM34.7 74.1l2 2l-2 2l-2-2zM47.1 101.7l2 2l-2 2l-2-2zM230.1 161.1l2 2l-2 2l-2-2zM36.8 210.2l2 2l-2 2l-2-2zM143.9 80.7l2 2l-2 2l-2-2zM123.4 163.2l2 2l-2 2l-2-2zM178.6 188.7l2 2l-2 2l-2-2zM138.0 181.6l2 2l-2 2l-2-2zM232.7 40.0l2 2l-2 2l-2-2zM105.5 6.9l2 2l-2 2l-2-2zM70.2 158.4l2 2l-2 2l-2-2zM117.0 52.9l2 2l-2 2l-2-2zM124.2 37.6l2 2l-2 2l-2-2zM63.6 177.1l2 2l-2 2l-2-2zM141.3 36.4l2 2l-2 2l-2-2zM89.3 207.4l2 2l-2 2l-2-2zM66.5 148.8l2 2l-2 2l-2-2zM23.1 190.7l2 2l-2 2l-2-2zM144.4 149.9l2 2l-2 2l-2-2zM74.2 181.0l2 2l-2 2l-2-2zM92.6 37.1l2 2l-2 2l-2-2zM194.0 137.1l2 2l-2 2l-2-2zM190.2 93.0l2 2l-2 2l-2-2zM37.6 36.5l2 2l-2 2l-2-2zM142.2 64.0l2 2l-2 2l-2-2zM81.1 97.7l2 2l-2 2l-2-2zM111.5 187.8l2 2l-2 2l-2-2zM184.8 123.6l2 2l-2 2l-2-2zM44.0 175.3l2 2l-2 2l-2-2zM58.3 218.4l2 2l-2 2l-2-2zM153.1 161.8l2 2l-2 2l-2-2zM146.8 21.1l2 2l-2 2l-2-2zM167.1 90.3l2 2l-2 2l-2-2zM42.1 89.8l2 2l-2 2l-2-2zM165.9 75.2l2 2l-2 2l-2-2zM89.2 34.7l2 2l-2 2l-2-2zM41.5 133.3l2 2l-2 2l-2-2zM116.4 77.2l2 2l-2 2l-2-2zM41.5 12.9l2 2l-2 2l-2-2zM216.6 43.1l2 2l-2 2l-2-2zM186.9 27.6l2 2l-2 2l-2-2zM181.1 169.9l2 2l-2 2l-2-2zM36.6 145.9l2 2l-2 2l-2-2zM65.8 158.8l2 2l-2 2l-2-2zM12.0 130.8l2 2l-2 2l-2-2zM208.4 69.1l2 2l-2 2l-2-2zM78.7 123.6l2 2l-2 2l-2-2zM78.0 179.7l2 2l-2 2l-2-2zM120.8 163.8l2 2l-2 2l-2-2zM76.9 81.9l2 2l-2 2l-2-2zM171.4 106.1l2 2l-2 2l-2-2zM204.0 52.6l2 2l-2 2l-2-2zM63.2 104.5l2 2l-2 2l-2-2zM146.3 105.4l2 2l-2 2l-2-2zM79.1 66.8l2 2l-2 2l-2-2zM55.0 208.9l2 2l-2 2l-2-2zM52.9 145.3l2 2l-2 2l-2-2zM170.1 146.9l2 2l-2 2l-2-2zM91.6 157.1l2 2l-2 2l-2-2zM136.8 198.2l2 2l-2 2l-2-2zM174.9 173.0l2 2l-2 2l-2-2zM198.3 29.7l2 2l-2 2l-2-2zM200.8 159.0l2 2l-2 2l-2-2zM124.9 123.0l2 2l-2 2l-2-2zM167.5 137.1l2 2l-2 2l-2-2zM216.2 220.7l2 2l-2 2l-2-2zM102.1 113.3l2 2l-2 2l-2-2zM128.5 153.9l2 2l-2 2l-2-2zM140.1 154.1l2 2l-2 2l-2-2zM193.6 211.5l2 2l-2 2l-2-2zM37.3 133.4l2 2l-2 2l-2-2zM214.6 47.9l2 2l-2 2l-2-2zM60.9 165.7l2 2l-2 2l-2-2zM182.2 107.0l2 2l-2 2l-2-2zM136.9 168.5l2 2l-2 2l-2-2zM80.7 84.7l2 2l-2 2l-2-2zM152.0 148.7l2 2l-2 2l-2-2zM175.8 95.7l2 2l-2 2l-2-2zM153.9 91.4l2 2l-2 2l-2-2zM70.7 73.4l2 2l-2 2l-2-2zM195.2 78.1l2 2l-2 2l-2-2zM173.9 120.1l2 2l-2 2l-2-2zM227.8 48.9l2 2l-2 2l-2-2zM89.5 139.0l2 2l-2 2l-2-2zM82.5 167.4l2 2l-2 2l-2-2zM118.1 167.4l2 2l-2 2l-2-2zM116.6 139.6l2 2l-2 2l-2-2zM64.3 182.9l2 2l-2 2l-2-2zM98.6 217.4l2 2l-2 2l-2-2zM199.7 65.3l2 2l-2 2l-2-2zM83.9 158.5l2 2l-2 2l-2-2zM72.0 103.6l2 2l-2 2l-2-2zM199.6 82.5l2 2l-2 2l-2-2zM62.2 43.0l2 2l-2 2l-2-2zM148.4 71.9l2 2l-2 2l-2-2zM156.4 87.8l2 2l-2 2l-2-2zM202.1 2.1l2 2l-2 2l-2-2zM69.6 142.4l2 2l-2 2l-2-2zM93.5 56.8l2 2l-2 2l-2-2zM154.3 41.8l2 2l-2 2l-2-2zM193.5 130.7l2 2l-2 2l-2-2zM152.9 110.4l2 2l-2 2l-2-2zM57.4 156.7l2 2l-2 2l-2-2zM53.5 173.9l2 2l-2 2l-2-2zM50.3 151.2l2 2l-2 2l-2-2zM46.7 163.9l2 2l-2 2l-2-2zM199.0 97.0l2 2l-2 2l-2-2zM81.8 149.0l2 2l-2 2l-2-2zM51.8 172.4l2 2l-2 2l-2-2zM94.8 81.1l2 2l-2 2l-2-2zM39.3 79.5l2 2l-2 2l-2-2zM132.4 163.1l2 2l-2 2l-2-2zM172.1 73.3l2 2l-2 2l-2-2zM174.5 85.7l2 2l-2 2l-2-2zM68.9 46.5l2 2l-2 2l-2-2zM112.4 34.2l2 2l-2 2l-2-2zM189.4 107.5l2 2l-2 2l-2-2zM77.2 173.3l2 2l-2 2l-2-2zM149.3 63.1l2 2l-2 2l-2-2zM204.6 179.5l2 2l-2 2l-2-2zM194.7 48.8l2 2l-2 2l-2-2zM120.8 173.4l2 2l-2 2l-2-2zM40.4 158.2l2 2l-2 2l-2-2zM59.4 84.6l2 2l-2 2l-2-2zM119.0 131.8l2 2l-2 2l-2-2zM212.5 56.1l2 2l-2 2l-2-2zM154.2 76.9l2 2l-2 2l-2-2zM87.0 89.7l2 2l-2 2l-2-2zM113.3 93.8l2 2l-2 2l-2-2zM115.5 167.1l2 2l-2 2l-2-2zM173.6 52.6l2 2l-2 2l-2-2zM89.1 70.8l2 2l-2 2l-2-2zM190.0 172.5l2 2l-2 2l-2-2zM85.0 53.0l2 2l-2 2l-2-2zM207.5 212.2l2 2l-2 2l-2-2zM143.3 138.3l2 2l-2 2l-2-2zM83.8 160.5l2 2l-2 2l-2-2zM129.7 197.0l2 2l-2 2l-2-2zM201.7 107.2l2 2l-2 2l-2-2zM209.2 33.2l2 2l-2 2l-2-2zM89.3 175.0l2 2l-2 2l-2-2zM191.8 206.3l2 2l-2 2l-2-2zM46.4 81.3l2 2l-2 2l-2-2zM201.2 6.4l2 2l-2 2l-2-2zM102.5 34.1l2 2l-2 2l-2-2zM160.8 50.1l2 2l-2 2l-2-2zM74.5 171.2l2 2l-2 2l-2-2zM63.0 177.7l2 2l-2 2l-2-2zM109.5 183.4l2 2l-2 2l-2-2zM85.5 174.0l2 2l-2 2l-2-2zM155.9 150.8l2 2l-2 2l-2-2zM96.5 126.4l2 2l-2 2l-2-2zM88.5 208.9l2 2l-2 2l-2-2zM151.3 139.7l2 2l-2 2l-2-2zM178.9 88.3l2 2l-2 2l-2-2zM206.6 164.6l2 2l-2 2l-2-2zM40.0 149.8l2 2l-2 2l-2-2zM162.8 117.6l2 2l-2 2l-2-2zM51.2 48.7l2 2l-2 2l-2-2zM88.4 137.4l2 2l-2 2l-2-2zM120.3 63.3l2 2l-2 2l-2-2zM58.8 187.1l2 2l-2 2l-2-2zM90.0 128.6l2 2l-2 2l-2-2zM188.4 114.9l2 2l-2 2l-2-2zM75.8 160.3l2 2l-2 2l-2-2zM88.5 142.1l2 2l-2 2l-2-2zM102.2 124.2l2 2l-2 2l-2-2zM169.6 192.1l2 2l-2 2l-2-2zM229.1 164.6l2 2l-2 2l-2-2zM159.2 169.2l2 2l-2 2l-2-2zM150.1 78.3l2 2l-2 2l-2-2zM85.9 41.4l2 2l-2 2l-2-2zM83.1 193.7l2 2l-2 2l-2-2zM112.0 78.1l2 2l-2 2l-2-2zM224.7 136.8l2 2l-2 2l-2-2zM155.4 181.1l2 2l-2 2l-2-2zM221.9 147.4l2 2l-2 2l-2-2zM43.0 86.1l2 2l-2 2l-2-2zM108.7 58.5l2 2l-2 2l-2-2zM159.4 114.5l2 2l-2 2l-2-2zM54.5 88.9l2 2l-2 2l-2-2zM58.8 161.2l2 2l-2 2l-2-2zM218.3 77.2l2 2l-2 2l-2-2zM121.4 57.8l2 2l-2 2l-2-2zM64.5 72.1l2 2l-2 2l-2-2zM34.2 143.8l2 2l-2 2l-2-2zM76.1 162.6l2 2l-2 2l-2-2zM62.5 170.9l2 2l-2 2l-2-2zM85.8 100.8l2 2l-2 2l-2-2zM149.3 52.0l2 2l-2 2l-2-2zM102.7 110.0l2 2l-2 2l-2-2zM89.1 77.6l2 2l-2 2l-2-2zM135.2 125.8l2 2l-2 2l-2-2zM57.5 29.0l2 2l-2 2l-2-2zM62.3 81.4l2 2l-2 2l-2-2zM225.6 8.2l2 2l-2 2l-2-2zM89.3 202.9l2 2l-2 2l-2-2zM79.6 97.0l2 2l-2 2l-2-2zM95.3 170.1l2 2l-2 2l-2-2zM96.0 101.1l2 2l-2 2l-2-2zM136.0 164.8l2 2l-2 2l-2-2zM157.2 174.0l2 2l-2 2l-2-2zM179.2 97.2l2 2l-2 2l-2-2zM50.8 221.3l2 2l-2 2l-2-2zM183.9 44.1l2 2l-2 2l-2-2zM61.3 81.9l2 2l-2 2l-2-2zM163.6 156.6l2 2l-2 2l-2-2zM168.4 168.9l2 2l-2 2l-2-2zM87.0 136.8l2 2l-2 2l-2-2zM82.9 186.0l2 2l-2 2l-2-2zM118.5 172.4l2 2l-2 2l-2-2zM178.6 82.7l2 2l-2 2l-2-2zM21.4 147.2l2 2l-2 2l-2-2zM206.7 114.4l2 2l-2 2l-2-2zM43.9 202.0l2 2l-2 2l-2-2zM167.5 100.1l2 2l-2 2l-2-2zM103.1 30.3l2 2l-2 2l-2-2zM152.5 146.9l2 2l-2 2l-2-2zM57.1 148.9l2 2l-2 2l-2-2zM50.1 59.9l2 2l-2 2l-2-2zM155.8 32.8l2 2l-2 2l-2-2zM167.7 74.8l2 2l-2 2l-2-2zM54.1 107.6l2 2l-2 2l-2-2zM46.6 55.2l2 2l-2 2l-2-2zM202.3 77.2l2 2l-2 2l-2-2zM108.4 197.5l2 2l-2 2l-2-2zM122.1 201.1l2 2l-2 2l-2-2zM87.0 188.9l2 2l-2 2l-2-2zM225.5 170.0l2 2l-2 2l-2-2zM209.2 66.4l2 2l-2 2l-2-2zM67.5 90.2l2 2l-2 2l-2-2zM38.7 90.3l2 2l-2 2l-2-2zM178.6 48.4l2 2l-2 2l-2-2zM23.0 108.7l2 2l-2 2l-2-2zM68.9 139.2l2 2l-2 2l-2-2zM191.7 156.5l2 2l-2 2l-2-2zM206.9 37.3l2 2l-2 2l-2-2zM70.2 58.7l2 2l-2 2l-2-2zM182.6 38.3l2 2l-2 2l-2-2zM63.2 133.2l2 2l-2 2l-2-2zM45.5 157.5l2 2l-2 2l-2-2zM220.9 142.2l2 2l-2 2l-2-2zM168.4 47.5l2 2l-2 2l-2-2zM74.5 153.2l2 2l-2 2l-2-2zM99.4 42.9l2 2l-2 2l-2-2zM73.8 173.2l2 2l-2 2l-2-2zM160.1 173.4l2 2l-2 2l-2-2zM209.6 103.1l2 2l-2 2l-2-2zM176.9 63.2l2 2l-2 2l-2-2zM204.3 55.1l2 2l-2 2l-2-2zM190.6 55.0l2 2l-2 2l-2-2zM63.1 151.1l2 2l-2 2l-2-2zM169.8 50.3l2 2l-2 2l-2-2zM185.3 149.1l2 2l-2 2l-2-2zM164.3 82.6l2 2l-2 2l-2-2zM68.8 176.6l2 2l-2 2l-2-2zM195.7 158.2l2 2l-2 2l-2-2zM154.6 151.6l2 2l-2 2l-2-2zM170.1 73.0l2 2l-2 2l-2-2zM177.3 38.6l2 2l-2 2l-2-2zM130.2 5.0l2 2l-2 2l-2-2zM183.6 39.7l2 2l-2 2l-2-2zM151.0 32.0l2 2l-2 2l-2-2zM223.2 90.6l2 2l-2 2l-2-2zM87.7 140.4l2 2l-2 2l-2-2zM113.4 96.0l2 2l-2 2l-2-2zM145.3 193.2l2 2l-2 2l-2-2zM179.9 179.1l2 2l-2 2l-2-2zM178.4 171.4l2 2l-2 2l-2-2zM211.9 54.1l2 2l-2 2l-2-2zM219.9 65.2l2 2l-2 2l-2-2zM66.8 49.3l2 2l-2 2l-2-2zM185.3 167.1l2 2l-2 2l-2-2zM195.8 208.7l2 2l-2 2l-2-2zM106.7 15.1l2 2l-2 2l-2-2zM168.3 111.0l2 2l-2 2l-2-2zM181.6 164.0l2 2l-2 2l-2-2zM71.7 68.4l2 2l-2 2l-2-2zM139.8 73.9l2 2l-2 2l-2-2zM244.5 150.2l2 2l-2 2l-2-2zM115.7 152.2l2 2l-2 2l-2-2zM53.7 145.9l2 2l-2 2l-2-2zM133.4 167.8l2 2l-2 2l-2-2zM134.7 154.1l2 2l-2 2l-2-2zM59.2 36.0l2 2l-2 2l-2-2zM57.9 41.1l2 2l-2 2l-2-2zM138.5 154.9l2 2l-2 2l-2-2zM192.5 175.3l2 2l-2 2l-2-2zM84.4 124.5l2 2l-2 2l-2-2zM50.6 61.9l2 2l-2 2l-2-2zM156.8 59.0l2 2l-2 2l-2-2zM101.7 28.8l2 2l-2 2l-2-2zM203.4 36.7l2 2l-2 2l-2-2zM28.1 78.1l2 2l-2 2l-2-2zM24.4 45.7l2 2l-2 2l-2-2zM75.5 151.9l2 2l-2 2l-2-2zM70.0 70.3l2 2l-2 2l-2-2zM58.8 208.6l2 2l-2 2l-2-2zM132.3 23.0l2 2l-2 2l-2-2zM99.1 207.0l2 2l-2 2l-2-2zM185.1 52.3l2 2l-2 2l-2-2zM176.2 153.3l2 2l-2 2l-2-2zM160.8 88.1l2 2l-2 2l-2-2zM115.3 45.4l2 2l-2 2l-2-2zM189.6 194.0l2 2l-2 2l-2-2zM187.0 31.7l2 2l-2 2l-2-2zM89.4 198.6l2 2l-2 2l-2-2zM199.1 127.0l2 2l-2 2l-2-2zM182.7 160.8l2 2l-2 2l-2-2zM142.3 69.3l2 2l-2 2l-2-2zM112.3 85.9l2 2l-2 2l-2-2zM224.4 152.7l2 2l-2 2l-2-2zM63.5 181.4l2 2l-2 2l-2-2zM87.6 122.1l2 2l-2 2l-2-2zM150.6 148.1l2 2l-2 2l-2-2zM218.6 163.9l2 2l-2 2l-2-2zM211.9 70.8l2 2l-2 2l-2-2zM71.3 49.3l2 2l-2 2l-2-2zM186.0 66.0l2 2l-2 2l-2-2zM80.5 23.0l2 2l-2 2l-2-2zM88.1 109.3l2 2l-2 2l-2-2zM62.8 42.4l2 2l-2 2l-2-2zM133.8 159.9l2 2l-2 2l-2-2zM153.3 204.1l2 2l-2 2l-2-2zM112.1 160.9l2 2l-2 2l-2-2zM86.1 179.5l2 2l-2 2l-2-2zM139.9 175.9l2 2l-2 2l-2-2zM163.0 57.4l2 2l-2 2l-2-2zM172.1 123.6l2 2l-2 2l-2-2zM213.9 46.9l2 2l-2 2l-2-2zM64.1 93.7l2 2l-2 2l-2-2zM224.5 153.7l2 2l-2 2l-2-2zM65.7 179.8l2 2l-2 2l-2-2zM180.1 23.0l2 2l-2 2l-2-2zM80.0 97.1l2 2l-2 2l-2-2zM103.2 128.6l2 2l-2 2l-2-2zM124.9 91.8l2 2l-2 2l-2-2zM202.4 67.2l2 2l-2 2l-2-2zM92.7 152.4l2 2l-2 2l-2-2zM159.1 41.0l2 2l-2 2l-2-2zM207.8 77.7l2 2l-2 2l-2-2zM54.2 46.5l2 2l-2 2l-2-2zM176.3 197.0l2 2l-2 2l-2-2zM109.4 48.3l2 2l-2 2l-2-2zM135.8 91.2l2 2l-2 2l-2-2zM192.8 76.4l2 2l-2 2l-2-2zM55.4 89.3l2 2l-2 2l-2-2zM154.7 31.3l2 2l-2 2l-2-2zM176.5 42.5l2 2l-2 2l-2-2zM182.1 40.1l2 2l-2 2l-2-2zM153.3 191.5l2 2l-2 2l-2-2zM177.1 106.0l2 2l-2 2l-2-2zM99.3 197.8l2 2l-2 2l-2-2zM217.8 49.7l2 2l-2 2l-2-2zM53.6 60.8l2 2l-2 2l-2-2zM101.3 151.5l2 2l-2 2l-2-2zM115.8 22.2l2 2l-2 2l-2-2zM44.9 105.7l2 2l-2 2l-2-2zM190.7 215.6l2 2l-2 2l-2-2zM70.9 61.8l2 2l-2 2l-2-2zM215.0 177.1l2 2l-2 2l-2-2zM218.8 147.6l2 2l-2 2l-2-2zM73.5 90.6l2 2l-2 2l-2-2zM180.2 87.2l2 2l-2 2l-2-2zM189.0 43.7l2 2l-2 2l-2-2zM112.8 72.3l2 2l-2 2l-2-2zM56.7 124.2l2 2l-2 2l-2-2zM121.4 35.7l2 2l-2 2l-2-2zM125.0 177.7l2 2l-2 2l-2-2zM162.2 73.2l2 2l-2 2l-2-2zM183.8 49.7l2 2l-2 2l-2-2zM88.9 57.1l2 2l-2 2l-2-2zM178.1 31.8l2 2l-2 2l-2-2zM139.7 89.2l2 2l-2 2l-2-2zM185.8 161.4l2 2l-2 2l-2-2zM86.2 20.6l2 2l-2 2l-2-2zM51.3 65.7l2 2l-2 2l-2-2zM176.5 56.7l2 2l-2 2l-2-2zM189.2 55.5l2 2l-2 2l-2-2zM175.6 66.0l2 2l-2 2l-2-2zM47.7 37.5l2 2l-2 2l-2-2zM115.3 96.6l2 2l-2 2l-2-2zM133.5 151.2l2 2l-2 2l-2-2zM71.0 85.6l2 2l-2 2l-2-2zM186.2 166.3l2 2l-2 2l-2-2zM92.6 88.4l2 2l-2 2l-2-2zM173.7 74.4l2 2l-2 2l-2-2zM132.6 148.1l2 2l-2 2l-2-2zM143.7 180.6l2 2l-2 2l-2-2zM154.6 86.3l2 2l-2 2l-2-2zM213.1 40.1l2 2l-2 2l-2-2zM56.4 115.3l2 2l-2 2l-2-2zM67.0 55.1l2 2l-2 2l-2-2zM40.9 88.5l2 2l-2 2l-2-2zM138.7 173.6l2 2l-2 2l-2-2zM136.4 159.8l2 2l-2 2l-2-2zM202.7 17.5l2 2l-2 2l-2-2zM170.5 132.3l2 2l-2 2l-2-2zM227.6 186.6l2 2l-2 2l-2-2zM69.2 221.7l2 2l-2 2l-2-2zM69.8 111.0l2 2l-2 2l-2-2zM36.3 156.7l2 2l-2 2l-2-2zM169.6 50.6l2 2l-2 2l-2-2zM140.9 21.5l2 2l-2 2l-2-2zM30.8 202.2l2 2l-2 2l-2-2zM137.0 92.3l2 2l-2 2l-2-2zM147.6 100.7l2 2l-2 2l-2-2zM164.8 141.2l2 2l-2 2l-2-2zM166.3 130.5l2 2l-2 2l-2-2zM178.8 48.8l2 2l-2 2l-2-2zM28.4 165.6l2 2l-2 2l-2-2zM185.3 140.0l2 2l-2 2l-2-2zM64.1 61.8l2 2l-2 2l-2-2zM68.9 138.1l2 2l-2 2l-2-2zM180.8 221.1l2 2l-2 2l-2-2zM87.0 146.3l2 2l-2 2l-2-2zM155.7 142.2l2 2l-2 2l-2-2zM67.4 168.8l2 2l-2 2l-2-2zM139.3 180.2l2 2l-2 2l-2-2zM182.1 222.6l2 2l-2 2l-2-2zM133.8 57.9l2 2l-2 2l-2-2zM163.8 42.5l2 2l-2 2l-2-2zM74.9 36.1l2 2l-2 2l-2-2zM218.7 144.9l2 2l-2 2l-2-2zM45.0 47.4l2 2l-2 2l-2-2zM147.6 180.3l2 2l-2 2l-2-2zM60.4 172.4l2 2l-2 2l-2-2zM71.9 35.0l2 2l-2 2l-2-2zM23.7 144.8l2 2l-2 2l-2-2zM228.6 98.7l2 2l-2 2l-2-2zM13.6 67.6l2 2l-2 2l-2-2zM117.9 178.3l2 2l-2 2l-2-2zM203.3 132.7l2 2l-2 2l-2-2zM234.9 65.7l2 2l-2 2l-2-2zM54.9 194.7l2 2l-2 2l-2-2zM98.6 64.6l2 2l-2 2l-2-2zM168.6 88.3l2 2l-2 2l-2-2zM145.5 160.2l2 2l-2 2l-2-2zM52.9 221.0l2 2l-2 2l-2-2zM172.2 177.9l2 2l-2 2l-2-2zM115.1 143.7l2 2l-2 2l-2-2zM99.5 150.4l2 2l-2 2l-2-2zM177.3 62.4l2 2l-2 2l-2-2zM128.9 145.1l2 2l-2 2l-2-2zM80.1 195.1l2 2l-2 2l-2-2zM87.2 27.1l2 2l-2 2l-2-2zM208.7 149.0l2 2l-2 2l-2-2zM99.8 121.9l2 2l-2 2l-2-2zM115.4 114.8l2 2l-2 2l-2-2zM227.2 70.8l2 2l-2 2l-2-2zM82.8 211.1l2 2l-2 2l-2-2zM160.0 62.5l2 2l-2 2l-2-2zM53.5 70.9l2 2l-2 2l-2-2zM34.7 89.6l2 2l-2 2l-2-2zM170.8 145.9l2 2l-2 2l-2-2zM130.7 81.7l2 2l-2 2l-2-2zM216.9 27.2l2 2l-2 2l-2-2zM97.2 148.0l2 2l-2 2l-2-2zM117.0 51.0l2 2l-2 2l-2-2zM101.1 157.9l2 2l-2 2l-2-2zM80.3 200.8l2 2l-2 2l-2-2zM25.0 77.5l2 2l-2 2l-2-2zM171.2 148.6l2 2l-2 2l-2-2zM166.1 48.6l2 2l-2 2l-2-2zM67.9 162.8l2 2l-2 2l-2-2zM185.5 90.3l2 2l-2 2l-2-2zM188.3 99.7l2 2l-2 2l-2-2zM114.8 170.9l2 2l-2 2l-2-2zM79.9 179.1l2 2l-2 2l-2-2zM191.4 91.8l2 2l-2 2l-2-2zM163.7 92.3l2 2l-2 2l-2-2zM91.8 116.1l2 2l-2 2l-2-2zM177.5 51.2l2 2l-2 2l-2-2zM65.9 164.4l2 2l-2 2l-2-2zM63.8 149.3l2 2l-2 2l-2-2zM145.5 98.8l2 2l-2 2l-2-2zM212.3 13.7l2 2l-2 2l-2-2zM186.0 173.5l2 2l-2 2l-2-2zM87.9 86.6l2 2l-2 2l-2-2zM55.6 166.1l2 2l-2 2l-2-2zM60.0 177.7l2 2l-2 2l-2-2zM245.4 61.3l2 2l-2 2l-2-2zM147.7 73.4l2 2l-2 2l-2-2zM169.4 45.7l2 2l-2 2l-2-2zM167.2 151.9l2 2l-2 2l-2-2zM62.6 47.8l2 2l-2 2l-2-2zM79.0 55.5l2 2l-2 2l-2-2zM219.4 77.4l2 2l-2 2l-2-2zM42.9 209.7l2 2l-2 2l-2-2zM231.3 173.4l2 2l-2 2l-2-2zM90.4 89.6l2 2l-2 2l-2-2zM80.8 87.1l2 2l-2 2l-2-2zM232.7 65.5l2 2l-2 2l-2-2zM123.9 67.3l2 2l-2 2l-2-2zM87.5 107.6l2 2l-2 2l-2-2zM219.0 189.4l2 2l-2 2l-2-2zM189.7 32.3l2 2l-2 2l-2-2zM175.0 114.0l2 2l-2 2l-2-2zM175.9 7.8l2 2l-2 2l-2-2zM40.4 191.5l2 2l-2 2l-2-2zM227.1 88.9l2 2l-2 2l-2-2zM180.4 107.6l2 2l-2 2l-2-2zM9.5 129.7l2 2l-2 2l-2-2zM57.8 135.8l2 2l-2 2l-2-2zM166.8 169.8l2 2l-2 2l-2-2zM178.6 159.6l2 2l-2 2l-2-2zM238.4 47.1l2 2l-2 2l-2-2zM155.6 176.3l2 2l-2 2l-2-2zM61.4 158.8l2 2l-2 2l-2-2zM158.9 144.8l2 2l-2 2l-2-2zM98.8 222.5l2 2l-2 2l-2-2zM211.9 98.7l2 2l-2 2l-2-2zM82.5 144.7l2 2l-2 2l-2-2zM206.2 154.7l2 2l-2 2l-2-2zM106.6 135.2l2 2l-2 2l-2-2zM100.4 162.6l2 2l-2 2l-2-2zM70.6 69.0l2 2l-2 2l-2-2zM105.9 54.8l2 2l-2 2l-2-2zM137.8 82.3l2 2l-2 2l-2-2zM237.0 37.9l2 2l-2 2l-2-2zM150.1 63.9l2 2l-2 2l-2-2zM148.3 197.2l2 2l-2 2l-2-2zM208.2 46.4l2 2l-2 2l-2-2zM232.9 87.0l2 2l-2 2l-2-2zM24.9 179.1l2 2l-2 2l-2-2zM100.6 168.4l2 2l-2 2l-2-2zM136.3 47.4l2 2l-2 2l-2-2zM39.1 45.1l2 2l-2 2l-2-2zM92.9 199.1l2 2l-2 2l-2-2zM167.9 104.0l2 2l-2 2l-2-2zM144.5 117.3l2 2l-2 2l-2-2zM225.2 151.2l2 2l-2 2l-2-2zM199.1 196.9l2 2l-2 2l-2-2zM90.1 149.5l2 2l-2 2l-2-2zM60.4 101.5l2 2l-2 2l-2-2zM107.2 23.3l2 2l-2 2l-2-2zM168.7 131.1l2 2l-2 2l-2-2zM126.2 17.5l2 2l-2 2l-2-2zM165.6 39.7l2 2l-2 2l-2-2zM187.2 128.6l2 2l-2 2l-2-2zM112.5 46.9l2 2l-2 2l-2-2zM182.6 39.9l2 2l-2 2l-2-2zM75.4 127.5l2 2l-2 2l-2-2zM173.1 95.5l2 2l-2 2l-2-2zM187.2 149.7l2 2l-2 2l-2-2zM233.9 81.3l2 2l-2 2l-2-2zM154.3 144.9l2 2l-2 2l-2-2zM83.7 56.6l2 2l-2 2l-2-2zM194.7 58.5l2 2l-2 2l-2-2zM78.6 35.7l2 2l-2 2l-2-2zM134.0 197.5l2 2l-2 2l-2-2zM173.7 49.6l2 2l-2 2l-2-2zM196.6 183.4l2 2l-2 2l-2-2zM76.0 163.4l2 2l-2 2l-2-2zM40.5 185.4l2 2l-2 2l-2-2zM204.7 104.0l2 2l-2 2l-2-2zM127.1 26.8l2 2l-2 2l-2-2zM210.6 197.9l2 2l-2 2l-2-2zM165.2 110.6l2 2l-2 2l-2-2zM199.8 51.3l2 2l-2 2l-2-2zM147.2 103.5l2 2l-2 2l-2-2zM88.3 43.1l2 2l-2 2l-2-2zM62.1 150.1l2 2l-2 2l-2-2zM218.8 60.5l2 2l-2 2l-2-2zM40.0 58.2l2 2l-2 2l-2-2zM157.9 136.4l2 2l-2 2l-2-2zM188.8 120.3l2 2l-2 2l-2-2zM103.8 114.7l2 2l-2 2l-2-2zM75.1 59.1l2 2l-2 2l-2-2zM123.5 217.1l2 2l-2 2l-2-2zM150.8 50.5l2 2l-2 2l-2-2zM145.8 10.9l2 2l-2 2l-2-2zM100.7 155.7l2 2l-2 2l-2-2zM152.3 34.8l2 2l-2 2l-2-2zM240.5 150.1l2 2l-2 2l-2-2zM166.8 83.3l2 2l-2 2l-2-2zM173.7 86.3l2 2l-2 2l-2-2zM83.2 108.4l2 2l-2 2l-2-2zM89.5 212.0l2 2l-2 2l-2-2zM221.3 42.5l2 2l-2 2l-2-2zM54.2 92.0l2 2l-2 2l-2-2zM150.0 133.6l2 2l-2 2l-2-2zM174.6 171.2l2 2l-2 2l-2-2zM67.1 166.0l2 2l-2 2l-2-2zM144.0 117.5l2 2l-2 2l-2-2zM165.0 163.5l2 2l-2 2l-2-2zM120.9 171.0l2 2l-2 2l-2-2zM50.6 62.2l2 2l-2 2l-2-2zM150.3 102.4l2 2l-2 2l-2-2zM155.7 133.1l2 2l-2 2l-2-2zM212.8 218.3l2 2l-2 2l-2-2zM187.5 77.9l2 2l-2 2l-2-2zM236.1 69.7l2 2l-2 2l-2-2zM77.8 141.8l2 2l-2 2l-2-2zM52.9 196.1l2 2l-2 2l-2-2zM185.8 95.8l2 2l-2 2l-2-2zM82.0 94.2l2 2l-2 2l-2-2zM60.3 57.7l2 2l-2 2l-2-2zM34.2 173.5l2 2l-2 2l-2-2zM133.1 45.3l2 2l-2 2l-2-2zM140.3 93.6l2 2l-2 2l-2-2zM61.3 129.7l2 2l-2 2l-2-2zM109.0 43.7l2 2l-2 2l-2-2zM93.9 4.6l2 2l-2 2l-2-2zM26.9 141.7l2 2l-2 2l-2-2zM76.9 134.0l2 2l-2 2l-2-2zM83.3 68.7l2 2l-2 2l-2-2zM75.3 57.2l2 2l-2 2l-2-2zM211.5 171.3l2 2l-2 2l-2-2zM181.6 2.4l2 2l-2 2l-2-2zM97.4 96.2l2 2l-2 2l-2-2zM100.2 61.6l2 2l-2 2l-2-2zM184.6 69.7l2 2l-2 2l-2-2zM61.3 22.5l2 2l-2 2l-2-2zM174.7 164.7l2 2l-2 2l-2-2zM87.9 100.5l2 2l-2 2l-2-2zM210.1 97.6l2 2l-2 2l-2-2zM116.3 157.9l2 2l-2 2l-2-2zM68.0 150.5l2 2l-2 2l-2-2zM94.8 79.7l2 2l-2 2l-2-2zM203.1 196.3l2 2l-2 2l-2-2zM190.0 66.9l2 2l-2 2l-2-2zM39.9 62.1l2 2l-2 2l-2-2zM221.4 41.1l2 2l-2 2l-2-2zM99.4 24.4l2 2l-2 2l-2-2zM93.1 39.8l2 2l-2 2l-2-2zM54.8 48.9l2 2l-2 2l-2-2zM177.4 92.6l2 2l-2 2l-2-2zM171.6 78.7l2 2l-2 2l-2-2zM222.6 61.0l2 2l-2 2l-2-2zM174.2 185.6l2 2l-2 2l-2-2zM156.8 99.1l2 2l-2 2l-2-2zM231.0 163.0l2 2l-2 2l-2-2zM84.4 125.7l2 2l-2 2l-2-2zM86.1 42.5l2 2l-2 2l-2-2zM192.3 168.6l2 2l-2 2l-2-2zM180.3 76.4l2 2l-2 2l-2-2zM107.9 146.7l2 2l-2 2l-2-2zM84.2 117.4l2 2l-2 2l-2-2zM59.7 168.9l2 2l-2 2l-2-2zM59.7 150.1l2 2l-2 2l-2-2zM178.0 186.3l2 2l-2 2l-2-2zM66.1 46.6l2 2l-2 2l-2-2zM154.5 31.6l2 2l-2 2l-2-2zM222.0 186.0l2 2l-2 2l-2-2zM62.7 79.5l2 2l-2 2l-2-2zM51.7 132.7l2 2l-2 2l-2-2zM184.0 175.2l2 2l-2 2l-2-2zM137.9 188.1l2 2l-2 2l-2-2zM200.0 40.0l2 2l-2 2l-2-2zM235.0 77.6l2 2l-2 2l-2-2zM108.0 22.3l2 2l-2 2l-2-2zM135.4 120.1l2 2l-2 2l-2-2zM98.6 104.5l2 2l-2 2l-2-2zM185.1 178.0l2 2l-2 2l-2-2zM40.4 96.6l2 2l-2 2l-2-2zM78.7 68.5l2 2l-2 2l-2-2zM41.3 199.9l2 2l-2 2l-2-2zM79.4 139.5l2 2l-2 2l-2-2zM162.9 64.2l2 2l-2 2l-2-2zM67.1 96.0l2 2l-2 2l-2-2zM35.3 14.4l2 2l-2 2l-2-2zM221.3 80.7l2 2l-2 2l-2-2zM170.8 100.8l2 2l-2 2l-2-2zM208.2 91.5l2 2l-2 2l-2-2zM148.3 86.5l2 2l-2 2l-2-2zM64.0 71.3l2 2l-2 2l-2-2zM70.4 99.8l2 2l-2 2l-2-2zM62.6 158.4l2 2l-2 2l-2-2zM72.4 122.5l2 2l-2 2l-2-2zM208.5 78.5l2 2l-2 2l-2-2zM37.1 61.4l2 2l-2 2l-2-2zM206.2 87.4l2 2l-2 2l-2-2zM181.4 146.3l2 2l-2 2l-2-2zM198.3 176.9l2 2l-2 2l-2-2zM243.0 127.4l2 2l-2 2l-2-2zM179.8 166.5l2 2l-2 2l-2-2zM70.7 155.1l2 2l-2 2l-2-2zM65.1 147.8l2 2l-2 2l-2-2zM128.6 108.5l2 2l-2 2l-2-2zM196.3 43.2l2 2l-2 2l-2-2zM108.0 69.8l2 2l-2 2l-2-2zM75.5 170.6l2 2l-2 2l-2-2zM191.9 44.0l2 2l-2 2l-2-2zM207.0 54.7l2 2l-2 2l-2-2zM51.1 93.9l2 2l-2 2l-2-2zM31.2 205.7l2 2l-2 2l-2-2zM162.1 51.5l2 2l-2 2l-2-2zM157.8 116.9l2 2l-2 2l-2-2zM229.2 58.2l2 2l-2 2l-2-2zM87.9 191.1l2 2l-2 2l-2-2zM76.7 139.7l2 2l-2 2l-2-2zM55.1 51.4l2 2l-2 2l-2-2zM132.6 143.9l2 2l-2 2l-2-2zM74.7 178.1l2 2l-2 2l-2-2zM81.8 155.5l2 2l-2 2l-2-2zM94.2 198.1l2 2l-2 2l-2-2zM177.0 202.7l2 2l-2 2l-2-2zM97.4 59.8l2 2l-2 2l-2-2zM243.0 88.3l2 2l-2 2l-2-2zM83.6 59.7l2 2l-2 2l-2-2zM40.4 84.7l2 2l-2 2l-2-2zM143.4 78.5l2 2l-2 2l-2-2zM139.6 82.7l2 2l-2 2l-2-2zM197.6 205.6l2 2l-2 2l-2-2zM111.8 107.1l2 2l-2 2l-2-2zM174.6 56.3l2 2l-2 2l-2-2zM151.7 17.3l2 2l-2 2l-2-2zM27.7 169.6l2 2l-2 2l-2-2zM126.4 148.4l2 2l-2 2l-2-2zM143.7 206.1l2 2l-2 2l-2-2zM242.4 146.5l2 2l-2 2l-2-2zM71.1 133.3l2 2l-2 2l-2-2zM193.1 178.2l2 2l-2 2l-2-2zM101.9 186.5l2 2l-2 2l-2-2zM156.6 134.6l2 2l-2 2l-2-2zM152.1 148.9l2 2l-2 2l-2-2zM193.9 194.1l2 2l-2 2l-2-2zM61.6 76.0l2 2l-2 2l-2-2zM145.7 30.2l2 2l-2 2l-2-2zM76.5 136.3l2 2l-2 2l-2-2zM196.1 28.5l2 2l-2 2l-2-2zM107.1 41.3l2 2l-2 2l-2-2zM232.4 172.5l2 2l-2 2l-2-2zM72.9 63.8l2 2l-2 2l-2-2zM69.2 115.0l2 2l-2 2l-2-2zM86.5 68.3l2 2l-2 2l-2-2zM90.5 88.9l2 2l-2 2l-2-2zM164.5 212.1l2 2l-2 2l-2-2zM190.0 166.8l2 2l-2 2l-2-2zM110.2 186.0l2 2l-2 2l-2-2zM190.8 18.0l2 2l-2 2l-2-2zM204.5 195.1l2 2l-2 2l-2-2zM91.0 38.8l2 2l-2 2l-2-2zM184.9 121.3l2 2l-2 2l-2-2zM194.1 73.5l2 2l-2 2l-2-2zM183.6 140.7l2 2l-2 2l-2-2zM58.3 155.7l2 2l-2 2l-2-2zM108.0 94.0l2 2l-2 2l-2-2zM36.1 162.1l2 2l-2 2l-2-2zM226.6 76.0l2 2l-2 2l-2-2zM85.6 210.3l2 2l-2 2l-2-2zM194.9 54.3l2 2l-2 2l-2-2zM185.3 170.5l2 2l-2 2l-2-2zM200.7 118.8l2 2l-2 2l-2-2zM158.0 207.8l2 2l-2 2l-2-2zM82.1 167.6l2 2l-2 2l-2-2zM93.6 105.4l2 2l-2 2l-2-2zM100.6 167.5l2 2l-2 2l-2-2zM125.1 152.6l2 2l-2 2l-2-2zM50.1 43.1l2 2l-2 2l-2-2zM86.1 127.3l2 2l-2 2l-2-2zM221.6 103.9l2 2l-2 2l-2-2zM125.2 150.6l2 2l-2 2l-2-2zM204.8 87.3l2 2l-2 2l-2-2zM31.7 75.6l2 2l-2 2l-2-2zM205.1 29.9l2 2l-2 2l-2-2zM160.6 160.2l2 2l-2 2l-2-2zM140.4 79.9l2 2l-2 2l-2-2zM65.5 40.7l2 2l-2 2l-2-2zM179.8 97.0l2 2l-2 2l-2-2zM135.4 212.1l2 2l-2 2l-2-2zM240.0 106.8l2 2l-2 2l-2-2zM180.7 182.0l2 2l-2 2l-2-2zM161.5 175.3l2 2l-2 2l-2-2zM104.9 48.2l2 2l-2 2l-2-2zM214.4 72.8l2 2l-2 2l-2-2zM54.3 208.6l2 2l-2 2l-2-2zM172.1 57.5l2 2l-2 2l-2-2zM69.8 64.4l2 2l-2 2l-2-2zM239.4 21.3l2 2l-2 2l-2-2zM211.0 19.7l2 2l-2 2l-2-2zM164.1 203.2l2 2l-2 2l-2-2zM75.9 109.3l2 2l-2 2l-2-2zM123.7 63.5l2 2l-2 2l-2-2zM72.9 207.7l2 2l-2 2l-2-2zM186.7 148.4l2 2l-2 2l-2-2zM144.1 115.8l2 2l-2 2l-2-2zM225.9 6.1l2 2l-2 2l-2-2zM106.8 150.8l2 2l-2 2l-2-2zM174.0 37.3l2 2l-2 2l-2-2zM121.4 110.2l2 2l-2 2l-2-2zM44.5 97.6l2 2l-2 2l-2-2zM188.8 99.1l2 2l-2 2l-2-2zM202.7 89.6l2 2l-2 2l-2-2zM165.9 188.3l2 2l-2 2l-2-2zM164.7 155.9l2 2l-2 2l-2-2zM69.3 164.0l2 2l-2 2l-2-2zM83.8 103.9l2 2l-2 2l-2-2zM34.7 76.0l2 2l-2 2l-2-2zM61.5 72.3l2 2l-2 2l-2-2zM222.1 195.2l2 2l-2 2l-2-2zM24.3 121.4l2 2l-2 2l-2-2zM142.1 99.7l2 2l-2 2l-2-2zM133.1 151.2l2 2l-2 2l-2-2zM38.9 151.8l2 2l-2 2l-2-2zM113.6 162.4l2 2l-2 2l-2-2zM118.4 71.3l2 2l-2 2l-2-2zM83.7 165.8l2 2l-2 2l-2-2zM92.8 93.7l2 2l-2 2l-2-2zM104.8 198.1l2 2l-2 2l-2-2zM145.2 84.3l2 2l-2 2l-2-2zM180.6 68.2l2 2l-2 2l-2-2zM177.6 43.6l2 2l-2 2l-2-2zM158.6 64.4l2 2l-2 2l-2-2zM122.8 59.0l2 2l-2 2l-2-2zM62.3 115.0l2 2l-2 2l-2-2zM186.9 157.8l2 2l-2 2l-2-2zM116.3 116.7l2 2l-2 2l-2-2zM169.7 83.6l2 2l-2 2l-2-2zM32.2 189.4l2 2l-2 2l-2-2zM90.7 93.4l2 2l-2 2l-2-2zM161.6 203.3l2 2l-2 2l-2-2zM203.7 98.7l2 2l-2 2l-2-2zM88.2 194.8l2 2l-2 2l-2-2zM153.2 166.6l2 2l-2 2l-2-2zM59.3 152.9l2 2l-2 2l-2-2zM117.0 87.8l2 2l-2 2l-2-2zM114.5 192.2l2 2l-2 2l-2-2zM161.2 105.4l2 2l-2 2l-2-2zM100.4 132.0l2 2l-2 2l-2-2zM103.1 25.8l2 2l-2 2l-2-2zM219.0 149.6l2 2l-2 2l-2-2zM90.3 61.0l2 2l-2 2l-2-2zM188.4 122.4l2 2l-2 2l-2-2zM79.5 145.2l2 2l-2 2l-2-2zM174.1 82.7l2 2l-2 2l-2-2zM85.4 131.1l2 2l-2 2l-2-2zM171.7 161.6l2 2l-2 2l-2-2zM195.5 178.3l2 2l-2 2l-2-2zM156.7 88.7l2 2l-2 2l-2-2zM173.3 93.9l2 2l-2 2l-2-2zM205.8 55.2l2 2l-2 2l-2-2zM86.5 115.4l2 2l-2 2l-2-2zM65.6 86.6l2 2l-2 2l-2-2zM237.3 219.7l2 2l-2 2l-2-2zM7.3 44.4l2 2l-2 2l-2-2zM55.2 74.6l2 2l-2 2l-2-2zM139.2 182.9l2 2l-2 2l-2-2zM82.3 65.1l2 2l-2 2l-2-2zM78.4 71.0l2 2l-2 2l-2-2zM59.4 69.8l2 2l-2 2l-2-2zM35.5 90.0l2 2l-2 2l-2-2zM210.6 62.0l2 2l-2 2l-2-2zM177.3 185.0l2 2l-2 2l-2-2zM107.0 122.9l2 2l-2 2l-2-2zM137.1 80.9l2 2l-2 2l-2-2zM12.2 143.5l2 2l-2 2l-2-2zM67.6 164.9l2 2l-2 2l-2-2zM160.3 161.2l2 2l-2 2l-2-2zM26.5 67.4l2 2l-2 2l-2-2zM3.6 66.3l2 2l-2 2l-2-2zM34.2 186.1l2 2l-2 2l-2-2zM160.0 193.0l2 2l-2 2l-2-2zM89.7 150.0l2 2l-2 2l-2-2zM121.0 63.7l2 2l-2 2l-2-2z" fill="#3cf53c"/></svg>
<div class="b" style="left:1074px;top:368.6px;width:147.20000000000005px;height:20.799999999999955px;background:#3cf03c"></div>
<svg class="b" style="left:1072px;top:290px" width="152" height="80" viewBox="1072 290 152 80"><path d="M1074.1 368.6 A73.5 73.5 0 0 1 1221.1 368.6Z" fill="#fdfdf2"/><path d="M1080.62 340.86 A72.5 72.5 0 0 0 1075.10 368.60 L1083.10 368.60 A64.5 64.5 0 0 1 1088.01 343.92Z" fill="#f6f62a"/><path d="M1214.58 340.86 A72.5 72.5 0 0 0 1080.62 340.86 L1088.01 343.92 A64.5 64.5 0 0 1 1207.19 343.92Z" fill="#3bea3b"/><path d="M1220.10 368.60 A72.5 72.5 0 0 0 1214.58 340.86 L1207.19 343.92 A64.5 64.5 0 0 1 1212.10 368.60Z" fill="#ee1c1c"/><line x1="1088.01" y1="343.92" x2="1080.62" y2="340.86" stroke="#3a6a3a" stroke-width="0.6"/><line x1="1122.92" y1="309.01" x2="1119.86" y2="301.62" stroke="#3a6a3a" stroke-width="0.6"/><line x1="1172.28" y1="309.01" x2="1175.34" y2="301.62" stroke="#3a6a3a" stroke-width="0.6"/><line x1="1207.19" y1="343.92" x2="1214.58" y2="340.86" stroke="#3a6a3a" stroke-width="0.6"/><path d="M1075.0 368.6 A72.6 72.6 0 0 1 1220.1999999999998 368.6" fill="none" stroke="#000" stroke-width="2.4"/><path d="M1083.1 368.6 A64.5 64.5 0 0 1 1212.1 368.6" fill="none" stroke="#000" stroke-width="1.2"/><line x1="1104.11" y1="325.11" x2="1095.63" y2="316.63" stroke="#000" stroke-width="2"/><line x1="1147.60" y1="307.10" x2="1147.60" y2="295.10" stroke="#000" stroke-width="2"/><line x1="1191.09" y1="325.11" x2="1199.57" y2="316.63" stroke="#000" stroke-width="2"/><rect x="1074.1" y="366.0" width="12" height="2.8" fill="#000"/><rect x="1209.1" y="366.0" width="12" height="2.8" fill="#000"/></svg>
<span class="t" style="left:1137.00px;top:337.66px;font-size:16px;color:#111;font-weight:bold;transform:scaleX(0.9622);">VU</span>
<svg class="b" style="left:1072px;top:290px" width="152" height="80" viewBox="1072 290 152 80"><line x1="1147.6" y1="368.6" x2="1127.20" y2="305.83" stroke="#000" stroke-width="1.8"/><path d="M1140.6 368.6 A7 7 0 0 1 1154.6 368.6Z" fill="#1d4f8e"/><line x1="1147.6" y1="368.6" x2="1145.44" y2="368.6" stroke="none"/></svg>
<span class="t" style="left:1102.00px;top:370.29px;font-size:11px;color:#202020;transform:scaleX(0.9686);">Audio Input: -24 dB</span>
<div class="b" style="left:1225.7px;top:368.6px;width:147.20000000000005px;height:20.799999999999955px;background:#fbfb3e"></div>
<svg class="b" style="left:1223.7px;top:290px" width="152" height="80" viewBox="1223.7 290 152 80"><path d="M1225.8 368.6 A73.5 73.5 0 0 1 1372.8 368.6Z" fill="#fdfdf2"/><path d="M1366.28 340.86 A72.5 72.5 0 0 0 1226.80 368.60 L1234.80 368.60 A64.5 64.5 0 0 1 1358.89 343.92Z" fill="#3bea3b"/><path d="M1371.80 368.60 A72.5 72.5 0 0 0 1366.28 340.86 L1358.89 343.92 A64.5 64.5 0 0 1 1363.80 368.60Z" fill="#ee1c1c"/><line x1="1239.71" y1="343.92" x2="1232.32" y2="340.86" stroke="#3a6a3a" stroke-width="0.6"/><line x1="1274.62" y1="309.01" x2="1271.56" y2="301.62" stroke="#3a6a3a" stroke-width="0.6"/><line x1="1323.98" y1="309.01" x2="1327.04" y2="301.62" stroke="#3a6a3a" stroke-width="0.6"/><line x1="1358.89" y1="343.92" x2="1366.28" y2="340.86" stroke="#3a6a3a" stroke-width="0.6"/><path d="M1226.7 368.6 A72.6 72.6 0 0 1 1371.8999999999999 368.6" fill="none" stroke="#000" stroke-width="2.4"/><path d="M1234.8 368.6 A64.5 64.5 0 0 1 1363.8 368.6" fill="none" stroke="#000" stroke-width="1.2"/><line x1="1255.81" y1="325.11" x2="1247.33" y2="316.63" stroke="#000" stroke-width="2"/><line x1="1299.30" y1="307.10" x2="1299.30" y2="295.10" stroke="#000" stroke-width="2"/><line x1="1342.79" y1="325.11" x2="1351.27" y2="316.63" stroke="#000" stroke-width="2"/><rect x="1225.8" y="366.0" width="12" height="2.8" fill="#000"/><rect x="1360.8" y="366.0" width="12" height="2.8" fill="#000"/></svg>
<span class="t" style="left:1282.90px;top:337.66px;font-size:16px;color:#111;font-weight:bold;">CPU</span>
<svg class="b" style="left:1223.7px;top:290px" width="152" height="80" viewBox="1223.7 290 152 80"><path d="M1292.3 368.6 A7 7 0 0 1 1306.3 368.6Z" fill="#1d4f8e"/></svg>
<span class="t" style="left:1253.40px;top:370.29px;font-size:11px;color:#202020;transform:scaleX(0.9454);">%CPU not available</span>
<div class="b" style="left:1490px;top:368.6px;width:147.20000000000005px;height:22.899999999999977px;background:#3cf03c"></div>
<svg class="b" style="left:1488px;top:290px" width="152" height="80" viewBox="1488 290 152 80"><path d="M1490.1 368.6 A73.5 73.5 0 0 1 1637.1 368.6Z" fill="#fdfdf2"/><path d="M1496.62 340.86 A72.5 72.5 0 0 0 1491.10 368.60 L1499.10 368.60 A64.5 64.5 0 0 1 1504.01 343.92Z" fill="#f6f62a"/><path d="M1630.58 340.86 A72.5 72.5 0 0 0 1496.62 340.86 L1504.01 343.92 A64.5 64.5 0 0 1 1623.19 343.92Z" fill="#3bea3b"/><path d="M1636.10 368.60 A72.5 72.5 0 0 0 1630.58 340.86 L1623.19 343.92 A64.5 64.5 0 0 1 1628.10 368.60Z" fill="#f6f62a"/><line x1="1504.01" y1="343.92" x2="1496.62" y2="340.86" stroke="#3a6a3a" stroke-width="0.6"/><line x1="1538.92" y1="309.01" x2="1535.86" y2="301.62" stroke="#3a6a3a" stroke-width="0.6"/><line x1="1588.28" y1="309.01" x2="1591.34" y2="301.62" stroke="#3a6a3a" stroke-width="0.6"/><line x1="1623.19" y1="343.92" x2="1630.58" y2="340.86" stroke="#3a6a3a" stroke-width="0.6"/><path d="M1491.0 368.6 A72.6 72.6 0 0 1 1636.1999999999998 368.6" fill="none" stroke="#000" stroke-width="2.4"/><path d="M1499.1 368.6 A64.5 64.5 0 0 1 1628.1 368.6" fill="none" stroke="#000" stroke-width="1.2"/><line x1="1520.11" y1="325.11" x2="1511.63" y2="316.63" stroke="#000" stroke-width="2"/><line x1="1563.60" y1="307.10" x2="1563.60" y2="295.10" stroke="#000" stroke-width="2"/><line x1="1607.09" y1="325.11" x2="1615.57" y2="316.63" stroke="#000" stroke-width="2"/><rect x="1490.1" y="366.0" width="12" height="2.8" fill="#000"/><rect x="1625.1" y="366.0" width="12" height="2.8" fill="#000"/></svg>
<span class="t" style="left:1547.90px;top:337.66px;font-size:16px;color:#111;font-weight:bold;transform:scaleX(0.9367);">AFC</span>
<svg class="b" style="left:1488px;top:290px" width="152" height="80" viewBox="1488 290 152 80"><line x1="1563.6" y1="368.6" x2="1560.72" y2="302.66" stroke="#000" stroke-width="1.8"/><path d="M1556.6 368.6 A7 7 0 0 1 1570.6 368.6Z" fill="#1d4f8e"/><line x1="1563.6" y1="368.6" x2="1563.29" y2="368.6" stroke="none"/></svg>
<span class="t" style="left:1533.40px;top:370.29px;font-size:11px;color:#202020;transform:scaleX(0.9374);">AFC: -7.0 Hz</span>
<div class="b" style="left:1641.8px;top:368.6px;width:147.20000000000005px;height:22.899999999999977px;background:#3cf03c"></div>
<svg class="b" style="left:1639.8px;top:290px" width="152" height="80" viewBox="1639.8 290 152 80"><path d="M1641.8999999999999 368.6 A73.5 73.5 0 0 1 1788.8999999999999 368.6Z" fill="#fdfdf2"/><path d="M1648.42 340.86 A72.5 72.5 0 0 0 1642.90 368.60 L1650.90 368.60 A64.5 64.5 0 0 1 1655.81 343.92Z" fill="#ee1c1c"/><path d="M1664.13 317.33 A72.5 72.5 0 0 0 1648.42 340.86 L1655.81 343.92 A64.5 64.5 0 0 1 1669.79 322.99Z" fill="#f6f62a"/><path d="M1787.90 368.60 A72.5 72.5 0 0 0 1664.13 317.33 L1669.79 322.99 A64.5 64.5 0 0 1 1779.90 368.60Z" fill="#3bea3b"/><line x1="1655.81" y1="343.92" x2="1648.42" y2="340.86" stroke="#3a6a3a" stroke-width="0.6"/><line x1="1690.72" y1="309.01" x2="1687.66" y2="301.62" stroke="#3a6a3a" stroke-width="0.6"/><line x1="1740.08" y1="309.01" x2="1743.14" y2="301.62" stroke="#3a6a3a" stroke-width="0.6"/><line x1="1774.99" y1="343.92" x2="1782.38" y2="340.86" stroke="#3a6a3a" stroke-width="0.6"/><path d="M1642.8 368.6 A72.6 72.6 0 0 1 1787.9999999999998 368.6" fill="none" stroke="#000" stroke-width="2.4"/><path d="M1650.8999999999999 368.6 A64.5 64.5 0 0 1 1779.8999999999999 368.6" fill="none" stroke="#000" stroke-width="1.2"/><line x1="1671.91" y1="325.11" x2="1663.43" y2="316.63" stroke="#000" stroke-width="2"/><line x1="1715.40" y1="307.10" x2="1715.40" y2="295.10" stroke="#000" stroke-width="2"/><line x1="1758.89" y1="325.11" x2="1767.37" y2="316.63" stroke="#000" stroke-width="2"/><rect x="1641.8999999999999" y="366.0" width="12" height="2.8" fill="#000"/><rect x="1776.8999999999999" y="366.0" width="12" height="2.8" fill="#000"/></svg>
<span class="t" style="left:1703.00px;top:337.66px;font-size:16px;color:#111;font-weight:bold;transform:scaleX(0.9384);">S/N</span>
<svg class="b" style="left:1639.8px;top:290px" width="152" height="80" viewBox="1639.8 290 152 80"><line x1="1715.3999999999999" y1="368.6" x2="1695.00" y2="305.83" stroke="#000" stroke-width="1.8"/><path d="M1708.3999999999999 368.6 A7 7 0 0 1 1722.3999999999999 368.6Z" fill="#1d4f8e"/><line x1="1715.3999999999999" y1="368.6" x2="1713.24" y2="368.6" stroke="none"/></svg>
<span class="t" style="left:1661.00px;top:370.29px;font-size:11px;color:#202020;transform:scaleX(0.9805);">S/N (2500 Hz): -4.3 dB</span>
<div class="b" style="left:1386px;top:297.3px;width:87.70000000000005px;height:18.19999999999999px;background:#fff;border:1px solid #a8a8a8;box-sizing:border-box"></div>
<span class="t" style="left:1415.50px;top:299.77px;font-size:11.5px;color:#000;">DATA</span>
<div class="b" style="left:1386px;top:321.3px;width:39.59999999999991px;height:18.30000000000001px;background:#fff;border:1px solid #a8a8a8;box-sizing:border-box"></div>
<span class="t" style="left:1394.90px;top:324.27px;font-size:11.5px;color:#000;transform:scaleX(0.9140);">ACK</span>
<div class="b" style="left:1434px;top:321.3px;width:39.700000000000045px;height:18.30000000000001px;background:#fff;border:1px solid #a8a8a8;box-sizing:border-box"></div>
<span class="t" style="left:1442.50px;top:324.27px;font-size:11.5px;color:#000;transform:scaleX(0.8911);">IDLE</span>
<div class="b" style="left:1386px;top:345.3px;width:39.59999999999991px;height:18.30000000000001px;background:#fff;border:1px solid #a8a8a8;box-sizing:border-box"></div>
<span class="t" style="left:1391.50px;top:348.27px;font-size:11.5px;color:#000;transform:scaleX(0.9040);">NACK</span>
<div class="b" style="left:1434px;top:345.3px;width:39.700000000000045px;height:18.30000000000001px;background:#fff;border:1px solid #a8a8a8;box-sizing:border-box"></div>
<span class="t" style="left:1436.40px;top:348.27px;font-size:11.5px;color:#000;transform:scaleX(0.9260);">BREAK</span>
<div class="b" style="left:1386px;top:369.4px;width:39.59999999999991px;height:18.200000000000045px;background:#fff;border:1px solid #a8a8a8;box-sizing:border-box"></div>
<span class="t" style="left:1394.40px;top:372.27px;font-size:11.5px;color:#000;transform:scaleX(0.8876);">REQ</span>
<div class="b" style="left:1434px;top:369.4px;width:39.700000000000045px;height:18.200000000000045px;background:#fff;border:1px solid #a8a8a8;box-sizing:border-box"></div>
<span class="t" style="left:1442.50px;top:372.27px;font-size:11.5px;color:#000;transform:scaleX(0.8924);">QRT</span>
<svg class="b" style="left:1074px;top:394px" width="712" height="87" viewBox="1074 394 712 87"><defs><filter id="vn" x="1074" y="394" width="712" height="87" filterUnits="userSpaceOnUse"><feTurbulence type="fractalNoise" baseFrequency="1.4" numOctaves="2" seed="3"/><feColorMatrix type="matrix" values="0 0 0 0 0  0 0 0 0 0  0 0 0 0 0  0 0 0 -3.4 2.15"/><feComposite operator="in" in2="SourceGraphic"/></filter><filter id="vb" x="-50%" y="-50%" width="200%" height="200%"><feGaussianBlur stdDeviation="9 3"/></filter></defs><rect x="1074" y="394" width="712" height="87" fill="#000"/><svg x="1074" y="394" width="712" height="22.80000000000001" viewBox="1074 394 712 22.80000000000001"><rect x="1074" y="394" width="712" height="22.80000000000001" fill="#176a17"/><rect x="1757" y="394" width="29" height="22.80000000000001" fill="#0c400c"/><rect x="1186" y="390" width="60" height="30.80000000000001" fill="#30ff30" opacity="0.60" filter="url(#vb)" transform="skewX(25) translate(-188.9 0)"/><rect x="1392" y="390" width="67" height="30.80000000000001" fill="#30ff30" opacity="1.00" filter="url(#vb)" transform="skewX(25) translate(-188.9 0)"/><rect x="1613" y="390" width="43" height="30.80000000000001" fill="#30ff30" opacity="0.60" filter="url(#vb)" transform="skewX(25) translate(-188.9 0)"/><rect x="1514" y="390" width="52" height="30.80000000000001" fill="#30ff30" opacity="0.40" filter="url(#vb)" transform="skewX(25) translate(-188.9 0)"/><rect x="1294" y="390" width="52" height="30.80000000000001" fill="#30ff30" opacity="0.30" filter="url(#vb)" transform="skewX(25) translate(-188.9 0)"/></svg><rect x="1074" y="394" width="712" height="22.80000000000001" fill="#000" filter="url(#vn)" opacity="0.85"/><rect x="1074" y="415.5" width="712" height="1.3" fill="#3ef03e"/><svg x="1074" y="421.8" width="712" height="23.69999999999999" viewBox="1074 421.8 712 23.69999999999999"><rect x="1074" y="421.8" width="712" height="23.69999999999999" fill="#176a17"/><rect x="1757" y="421.8" width="29" height="23.69999999999999" fill="#0c400c"/><rect x="1171" y="417.8" width="43" height="31.69999999999999" fill="#30ff30" opacity="0.60" filter="url(#vb)" transform="skewX(25) translate(-202.1 0)"/><rect x="1321" y="417.8" width="59" height="31.69999999999999" fill="#30ff30" opacity="0.70" filter="url(#vb)" transform="skewX(25) translate(-202.1 0)"/><rect x="1486" y="417.8" width="44" height="31.69999999999999" fill="#30ff30" opacity="0.70" filter="url(#vb)" transform="skewX(25) translate(-202.1 0)"/><rect x="1644" y="417.8" width="36" height="31.69999999999999" fill="#30ff30" opacity="0.50" filter="url(#vb)" transform="skewX(25) translate(-202.1 0)"/><rect x="1414" y="417.8" width="42" height="31.69999999999999" fill="#30ff30" opacity="0.30" filter="url(#vb)" transform="skewX(25) translate(-202.1 0)"/></svg><rect x="1074" y="421.8" width="712" height="23.69999999999999" fill="#000" filter="url(#vn)" opacity="0.85"/><rect x="1074" y="444.2" width="712" height="1.3" fill="#3ef03e"/><svg x="1074" y="451" width="712" height="23" viewBox="1074 451 712 23"><rect x="1074" y="451" width="712" height="23" fill="#176a17"/><rect x="1757" y="451" width="29" height="23" fill="#0c400c"/><rect x="1155" y="447" width="39" height="31" fill="#30ff30" opacity="0.50" filter="url(#vb)" transform="skewX(25) translate(-215.5 0)"/><rect x="1257" y="447" width="44" height="31" fill="#30ff30" opacity="0.60" filter="url(#vb)" transform="skewX(25) translate(-215.5 0)"/><rect x="1352" y="447" width="44" height="31" fill="#30ff30" opacity="0.80" filter="url(#vb)" transform="skewX(25) translate(-215.5 0)"/><rect x="1463" y="447" width="35" height="31" fill="#30ff30" opacity="0.60" filter="url(#vb)" transform="skewX(25) translate(-215.5 0)"/><rect x="1550" y="447" width="43" height="31" fill="#30ff30" opacity="0.70" filter="url(#vb)" transform="skewX(25) translate(-215.5 0)"/><rect x="1652" y="447" width="36" height="31" fill="#30ff30" opacity="0.50" filter="url(#vb)" transform="skewX(25) translate(-215.5 0)"/></svg><rect x="1074" y="451" width="712" height="23" fill="#000" filter="url(#vn)" opacity="0.85"/><rect x="1074" y="472.7" width="712" height="1.3" fill="#3ef03e"/><path d="M1101.3 394 V445.5 M1757 394 V445.5" stroke="#b8502c" stroke-width="2"/><path d="M1101 451 V474 M1757 451 V474" stroke="#e02020" stroke-width="2"/><path d="M1074.5 481 V394.5 H1786" stroke="#9a9a9a" stroke-width="1" fill="none"/></svg>
<div class="b" style="left:1074.5px;top:495px;width:44.09999999999991px;height:22.399999999999977px;border-top:1px solid #a0a0a0;border-left:1px solid #a0a0a0;border-right:1px solid #fff;border-bottom:1px solid #fff;box-sizing:border-box"></div>
<div class="b" style="left:1121.6px;top:495px;width:288.60000000000014px;height:22.399999999999977px;border-top:1px solid #a0a0a0;border-left:1px solid #a0a0a0;border-right:1px solid #fff;border-bottom:1px solid #fff;box-sizing:border-box"></div>
<div class="b" style="left:1413.6px;top:495px;width:74.0px;height:22.399999999999977px;border-top:1px solid #a0a0a0;border-left:1px solid #a0a0a0;border-right:1px solid #fff;border-bottom:1px solid #fff;box-sizing:border-box"></div>
<div class="b" style="left:1491.7px;top:495px;width:84.09999999999991px;height:22.399999999999977px;border-top:1px solid #a0a0a0;border-left:1px solid #a0a0a0;border-right:1px solid #fff;border-bottom:1px solid #fff;box-sizing:border-box"></div>
<div class="b" style="left:1579.4px;top:495px;width:30.0px;height:22.399999999999977px;border-top:1px solid #a0a0a0;border-left:1px solid #a0a0a0;border-right:1px solid #fff;border-bottom:1px solid #fff;box-sizing:border-box"></div>
<div class="b" style="left:1613.5px;top:495px;width:63.90000000000009px;height:22.399999999999977px;border-top:1px solid #a0a0a0;border-left:1px solid #a0a0a0;border-right:1px solid #fff;border-bottom:1px solid #fff;box-sizing:border-box"></div>
<div class="b" style="left:1681.5px;top:495px;width:46.799999999999955px;height:22.399999999999977px;border-top:1px solid #a0a0a0;border-left:1px solid #a0a0a0;border-right:1px solid #fff;border-bottom:1px solid #fff;box-sizing:border-box"></div>
<div class="b" style="left:1732.6px;top:495px;width:53.40000000000009px;height:22.399999999999977px;border-top:1px solid #a0a0a0;border-left:1px solid #a0a0a0;border-right:1px solid #fff;border-bottom:1px solid #fff;box-sizing:border-box"></div>
<div class="b" style="left:1077.8px;top:499.5px;width:13px;height:13px;border-radius:50%;background:#33ee55"></div>
<div class="b" style="left:1661.3px;top:499.5px;width:13px;height:13px;border-radius:50%;background:#f4f42a"></div>
<div class="b" style="left:1712.7px;top:499.5px;width:13px;height:13px;border-radius:50%;background:#33ee55"></div>
<div class="b" style="left:1770.3px;top:499.5px;width:13px;height:13px;border-radius:50%;background:#f4f42a"></div>
<span class="t" style="left:1098.30px;top:500.87px;font-size:11.5px;color:#000;transform:scaleX(0.9384);">RX</span>
<span class="t" style="left:1146.00px;top:500.87px;font-size:11.5px;color:#000;transform:scaleX(0.9303);">WG1V &lt;-&gt; W1EO</span>
<span class="t" style="left:1416.50px;top:500.87px;font-size:11.5px;color:#000;">(5)</span>
<span class="t" style="left:1435.20px;top:500.87px;font-size:11.5px;color:#000;transform:scaleX(0.9282);">270 bps</span>
<span class="t" style="left:1515.70px;top:500.87px;font-size:11.5px;color:#000;transform:scaleX(0.9118);">17518 Bytes</span>
<span class="t" style="left:1583.70px;top:500.87px;font-size:11.5px;color:#000;transform:scaleX(0.9106);">2750</span>
<span class="t" style="left:1617.30px;top:500.87px;font-size:11.5px;color:#000;transform:scaleX(0.9193);">LISTEN</span>
<span class="t" style="left:1685.50px;top:500.87px;font-size:11.5px;color:#000;transform:scaleX(0.8696);">TCP</span>
<span class="t" style="left:1735.50px;top:500.87px;font-size:11.5px;color:#000;transform:scaleX(0.8967);">BUSY</span>
<svg class="b" style="left:1120px;top:495px" width="400" height="23" viewBox="1120 495 400 23"><rect x="1124" y="497" width="10" height="7" fill="#40a0a0" stroke="#333" stroke-width="0.8"/><rect x="1124" y="508" width="10" height="7" fill="#40a0a0" stroke="#333" stroke-width="0.8"/><rect x="1123" y="504" width="12" height="2" fill="#555"/><rect x="1123" y="515" width="12" height="2" fill="#555"/><circle cx="1137" cy="506" r="4" fill="#c8c040" stroke="#444" stroke-width="0.7"/><rect x="1134" y="510" width="7" height="6" fill="#fff" stroke="#2030c0" stroke-width="0.8"/><path d="M1499 499 H1505 V505 H1508 L1502 511 L1496 505 H1499Z" fill="#40c040" stroke="#208020" stroke-width="0.6"/><path d="M1495.5 510 V514.5 H1508.5 V510" stroke="#b08040" stroke-width="1.5" fill="none"/></svg>
<div class="b" style="left:1059.5px;top:522.5px;width:740.5px;height:471.0px;border-radius:10px;background:#0b3a80;box-shadow:0 0 0 0.5px rgba(0,0,0,.35),0 8px 24px rgba(0,0,0,.22);overflow:hidden">
<div class="b" style="left:-1059.5px;top:-522.5px;width:1814px;height:999px">
<div class="b" style="left:1072.2px;top:535px;width:12px;height:12px;border-radius:50%;background:#5a7198"></div>
<div class="b" style="left:1092.2px;top:535px;width:12px;height:12px;border-radius:50%;background:#5a7198"></div>
<div class="b" style="left:1112.2px;top:535px;width:12px;height:12px;border-radius:50%;background:#5a7198"></div>
<svg class="b" style="left:1160px;top:525px" width="640" height="34" viewBox="1160 525 640 34"><path d="M1170.5 538 H1174 L1179 533.8 V548 L1174 544 H1170.5Z" fill="#fff"/><path d="M1181 537.5 Q1183 541 1181 544.5 M1183.3 535.5 Q1186.3 541 1183.3 546.5 M1185.6 533.5 Q1189.6 541 1185.6 548.5" stroke="#fff" stroke-width="1.3" fill="none" stroke-linecap="round"/><line x1="1205" y1="541" x2="1231" y2="541" stroke="#b8bcc4" stroke-width="4.5" stroke-linecap="round"/><line x1="1231" y1="541" x2="1287" y2="541" stroke="#e9eef7" stroke-width="4.5" stroke-linecap="round"/><circle cx="1231" cy="541" r="9.6" fill="#fff" stroke="#c8d0dc" stroke-width="0.6"/><circle cx="1313.4" cy="541" r="5" stroke="#6d8fc8" stroke-width="1.1" fill="none"/><circle cx="1313.4" cy="541" r="1.8" stroke="#6d8fc8" stroke-width="1" fill="none"/><path d="M1318.20 541.00 L1320.00 541.00 M1316.79 544.39 L1318.07 545.67 M1313.40 545.80 L1313.40 547.60 M1310.01 544.39 L1308.73 545.67 M1308.60 541.00 L1306.80 541.00 M1310.01 537.61 L1308.73 536.33 M1313.40 536.20 L1313.40 534.40 M1316.79 537.61 L1318.07 536.33 " stroke="#6d8fc8" stroke-width="2.2"/><rect x="1337" y="530" width="32.8" height="21.7" rx="4.5" fill="#6b6b6b"/><rect x="1468" y="532.4" width="17" height="16.8" fill="#e8172b"/><rect x="1504.8" y="531" width="89" height="20" rx="5.5" fill="#fff"/><path d="M1777 536.5 L1781.5 541 L1777 545.5 M1782 536.5 L1786.5 541 L1782 545.5" stroke="#13285a" stroke-width="1.7" fill="none"/></svg>
<span class="t" style="left:1342.50px;top:534.77px;font-size:13.5px;color:#fff;transform:scaleX(0.9363);-webkit-text-stroke:0.4px #fff;">Rec</span>
<span class="t" style="left:1413.30px;top:534.70px;font-size:13px;color:#fff;transform:scaleX(1.0171);-webkit-text-stroke:0.35px #fff;">1: 3.596</span>
<span class="t" style="left:1471.50px;top:534.80px;font-size:13px;color:#fff;font-weight:bold;transform:scaleX(1.0684);">A</span>
<span class="t" style="left:1515.00px;top:534.60px;font-size:13px;color:#1a1a1a;transform:scaleX(1.0656);-webkit-text-stroke:0.15px #1a1a1a;">Disconnect</span>
<svg class="b" style="left:1112.5px;top:560px" width="687.5" height="197" viewBox="1112.5 560 687.5 197"><defs><linearGradient id="tr" x1="0" y1="0" x2="0" y2="1"><stop offset="0" stop-color="#d04040"/><stop offset="0.45" stop-color="#b0c040"/><stop offset="1" stop-color="#30d080"/></linearGradient></defs><rect x="1112.5" y="560" width="638.0" height="197" fill="#0f3c5a"/><rect x="1430.5" y="560" width="147.5" height="197" fill="#1a6ea4"/><rect x="1750.5" y="560" width="50" height="197" fill="#0b2537"/><path d="M1115.0 560 V727 M1164.1 560 V727 M1213.2 560 V727 M1262.3 560 V727 M1311.4 560 V727 M1360.5 560 V727 M1409.6 560 V727 M1458.7 560 V727 M1507.8 560 V727 M1556.9 560 V727 M1606.0 560 V727 M1655.1 560 V727 M1704.2 560 V727 M1753.3 560 V727 M1112.5 582.2 H1800 M1112.5 602.9 H1800 M1112.5 623.6 H1800 M1112.5 644.3 H1800 M1112.5 665.0 H1800 M1112.5 685.7 H1800 M1112.5 706.4 H1800 M1112.5 727.1 H1800 " stroke="#7fb0d0" stroke-opacity="0.33" stroke-width="1.3"/><path d="M1112.5 727 L1112.5 723.5 L1114.0 724.9 L1115.5 723.9 L1117.0 724.7 L1118.5 723.4 L1120.0 725.4 L1121.5 724.7 L1123.0 723.7 L1124.5 723.6 L1126.0 723.4 L1127.5 724.4 L1129.0 724.7 L1130.5 723.0 L1132.0 723.9 L1133.5 725.3 L1135.0 725.1 L1136.5 721.4 L1138.0 725.0 L1139.5 724.2 L1141.0 723.7 L1142.5 725.3 L1144.0 725.3 L1145.5 724.9 L1147.0 725.4 L1148.5 725.1 L1150.0 724.4 L1151.5 723.7 L1153.0 725.2 L1154.5 722.6 L1156.0 724.4 L1157.5 723.2 L1159.0 725.2 L1160.5 723.1 L1162.0 725.5 L1163.5 724.3 L1165.0 725.2 L1166.5 720.2 L1168.0 725.4 L1169.5 724.2 L1171.0 723.4 L1172.5 725.0 L1174.0 724.4 L1175.5 725.4 L1177.0 724.9 L1178.5 725.3 L1180.0 723.9 L1181.5 724.6 L1183.0 724.2 L1184.5 722.5 L1186.0 724.7 L1187.5 724.4 L1189.0 725.5 L1190.5 724.0 L1192.0 724.5 L1193.5 723.9 L1195.0 725.3 L1196.5 723.5 L1198.0 724.5 L1199.5 725.3 L1201.0 724.3 L1202.5 724.3 L1204.0 724.8 L1205.5 722.9 L1207.0 724.9 L1208.5 724.6 L1210.0 724.7 L1211.5 725.0 L1213.0 725.2 L1214.5 725.2 L1216.0 724.5 L1217.5 723.9 L1219.0 724.9 L1220.5 724.6 L1222.0 723.1 L1223.5 723.9 L1225.0 723.8 L1226.5 724.3 L1228.0 724.4 L1229.5 725.2 L1231.0 724.3 L1232.5 722.7 L1234.0 725.0 L1235.5 724.4 L1237.0 722.4 L1238.5 725.1 L1240.0 723.9 L1241.5 724.1 L1243.0 723.7 L1244.5 721.6 L1246.0 722.7 L1247.5 725.2 L1249.0 724.3 L1250.5 725.3 L1252.0 724.1 L1253.5 725.3 L1255.0 724.9 L1256.5 723.7 L1258.0 724.4 L1259.5 725.4 L1261.0 723.3 L1262.5 724.3 L1264.0 724.2 L1265.5 723.7 L1267.0 725.0 L1268.5 722.6 L1270.0 724.0 L1271.5 725.1 L1273.0 724.7 L1274.5 723.0 L1276.0 723.9 L1277.5 725.5 L1279.0 724.5 L1280.5 725.2 L1282.0 721.7 L1283.5 724.2 L1285.0 721.8 L1286.5 723.9 L1288.0 724.0 L1289.5 724.8 L1291.0 725.1 L1292.5 721.5 L1294.0 724.5 L1295.5 725.3 L1297.0 723.0 L1298.5 725.4 L1300.0 722.5 L1301.5 724.4 L1303.0 724.7 L1304.5 724.3 L1306.0 723.2 L1307.5 724.5 L1309.0 725.0 L1310.5 722.6 L1312.0 724.4 L1313.5 724.5 L1315.0 724.6 L1316.5 724.6 L1318.0 725.0 L1319.5 724.2 L1321.0 725.4 L1322.5 725.0 L1324.0 725.3 L1325.5 724.8 L1327.0 724.1 L1328.5 724.7 L1330.0 725.1 L1331.5 723.3 L1333.0 722.9 L1334.5 723.2 L1336.0 725.2 L1337.5 724.7 L1339.0 723.5 L1340.5 725.2 L1342.0 725.2 L1343.5 722.0 L1345.0 725.1 L1346.5 724.3 L1348.0 721.6 L1349.5 723.2 L1351.0 725.2 L1352.5 722.9 L1354.0 725.2 L1355.5 722.9 L1357.0 719.9 L1358.5 723.7 L1360.0 724.6 L1361.5 725.2 L1363.0 722.1 L1364.5 725.3 L1366.0 723.0 L1367.5 724.5 L1369.0 722.1 L1370.5 724.0 L1372.0 723.5 L1373.5 722.9 L1375.0 723.6 L1376.5 723.0 L1378.0 724.1 L1379.5 724.1 L1381.0 723.9 L1382.5 724.4 L1384.0 724.4 L1385.5 723.6 L1387.0 724.4 L1388.5 723.5 L1390.0 724.4 L1391.5 722.2 L1393.0 725.4 L1394.5 725.3 L1396.0 723.9 L1397.5 725.3 L1399.0 723.4 L1400.5 722.7 L1402.0 724.4 L1403.5 723.2 L1405.0 724.2 L1406.5 723.4 L1408.0 725.1 L1409.5 724.4 L1411.0 725.4 L1412.5 724.9 L1414.0 723.7 L1415.5 722.8 L1417.0 723.1 L1418.5 725.5 L1420.0 725.3 L1421.5 724.7 L1423.0 723.2 L1424.5 725.2 L1426.0 724.6 L1427.5 723.6 L1429.0 724.2 L1430.5 722.3 L1432.0 724.3 L1433.5 724.4 L1435.0 723.4 L1436.5 725.0 L1438.0 723.9 L1439.5 724.3 L1441.0 722.2 L1442.5 724.3 L1444.0 724.4 L1445.5 724.3 L1447.0 724.8 L1448.5 724.3 L1450.0 723.6 L1451.5 721.7 L1453.0 718.8 L1454.5 715.1 L1456.0 711.2 L1457.5 708.1 L1459.0 707.0 L1460.5 708.1 L1462.0 711.2 L1463.5 715.1 L1465.0 718.8 L1466.5 721.7 L1468.0 723.6 L1469.5 724.3 L1471.0 722.7 L1472.5 723.8 L1474.0 725.3 L1475.5 725.1 L1477.0 725.3 L1478.5 725.2 L1480.0 725.2 L1481.5 725.0 L1483.0 723.5 L1484.5 724.5 L1486.0 722.9 L1487.5 724.6 L1489.0 725.1 L1490.5 724.5 L1492.0 723.3 L1493.5 721.2 L1495.0 717.8 L1496.5 713.3 L1498.0 708.3 L1499.5 703.9 L1501.0 701.3 L1502.5 701.4 L1504.0 704.1 L1505.5 708.6 L1507.0 713.6 L1508.5 718.1 L1510.0 721.4 L1511.5 723.4 L1513.0 724.6 L1514.5 723.7 L1516.0 725.4 L1517.5 725.3 L1519.0 724.5 L1520.5 725.3 L1522.0 724.0 L1523.5 724.9 L1525.0 723.7 L1526.5 723.5 L1528.0 723.7 L1529.5 723.3 L1531.0 723.7 L1532.5 724.9 L1534.0 725.1 L1535.5 723.2 L1537.0 723.8 L1538.5 722.0 L1540.0 719.3 L1541.5 715.8 L1543.0 712.1 L1544.5 709.3 L1546.0 708.2 L1547.5 709.3 L1549.0 712.1 L1550.5 715.8 L1552.0 719.3 L1553.5 722.0 L1555.0 723.8 L1556.5 724.7 L1558.0 722.6 L1559.5 723.9 L1561.0 723.5 L1562.5 724.7 L1564.0 722.2 L1565.5 721.1 L1567.0 725.0 L1568.5 722.7 L1570.0 724.8 L1571.5 724.0 L1573.0 722.3 L1574.5 724.6 L1576.0 724.3 L1577.5 724.0 L1579.0 724.6 L1580.5 722.9 L1582.0 724.6 L1583.5 725.1 L1585.0 725.5 L1586.5 725.3 L1588.0 725.0 L1589.5 725.2 L1591.0 724.6 L1592.5 724.1 L1594.0 723.1 L1595.5 723.4 L1597.0 718.3 L1598.5 713.3 L1600.0 715.1 L1601.5 721.1 L1603.0 721.0 L1604.5 718.0 L1606.0 721.0 L1607.5 724.5 L1609.0 725.3 L1610.5 725.2 L1612.0 723.6 L1613.5 724.9 L1615.0 723.0 L1616.5 724.2 L1618.0 724.0 L1619.5 724.4 L1621.0 723.8 L1622.5 724.9 L1624.0 724.0 L1625.5 723.6 L1627.0 722.7 L1628.5 724.7 L1630.0 722.5 L1631.5 723.6 L1633.0 725.1 L1634.5 724.5 L1636.0 725.0 L1637.5 723.7 L1639.0 725.1 L1640.5 725.2 L1642.0 725.3 L1643.5 723.6 L1645.0 725.1 L1646.5 723.2 L1648.0 723.8 L1649.5 723.8 L1651.0 724.8 L1652.5 725.3 L1654.0 724.9 L1655.5 723.9 L1657.0 725.1 L1658.5 722.0 L1660.0 724.5 L1661.5 725.3 L1663.0 723.7 L1664.5 724.3 L1666.0 724.3 L1667.5 724.1 L1669.0 722.4 L1670.5 724.1 L1672.0 725.3 L1673.5 724.7 L1675.0 723.4 L1676.5 724.7 L1678.0 725.1 L1679.5 725.4 L1681.0 725.2 L1682.5 725.1 L1684.0 724.4 L1685.5 725.0 L1687.0 724.2 L1688.5 724.1 L1690.0 723.7 L1691.5 723.5 L1693.0 723.9 L1694.5 724.1 L1696.0 724.2 L1697.5 725.5 L1699.0 724.4 L1700.5 723.8 L1702.0 725.2 L1703.5 724.3 L1705.0 724.3 L1706.5 724.6 L1708.0 725.3 L1709.5 724.9 L1711.0 723.3 L1712.5 724.2 L1714.0 724.0 L1715.5 724.2 L1717.0 723.7 L1718.5 724.8 L1720.0 724.6 L1721.5 725.3 L1723.0 722.6 L1724.5 724.4 L1726.0 724.7 L1727.5 724.1 L1729.0 722.2 L1730.5 724.4 L1732.0 719.9 L1733.5 724.8 L1735.0 724.9 L1736.5 725.3 L1738.0 722.9 L1739.5 725.5 L1741.0 724.8 L1742.5 724.7 L1744.0 724.0 L1745.5 725.3 L1747.0 724.7 L1748.5 723.5 L1750.0 724.1 L1751.5 724.4 L1753.0 725.4 L1754.5 724.0 L1756.0 725.3 L1757.5 724.1 L1759.0 724.3 L1760.5 725.5 L1762.0 725.5 L1763.5 724.7 L1765.0 725.3 L1766.5 725.5 L1768.0 724.2 L1769.5 725.4 L1771.0 723.5 L1772.5 724.1 L1774.0 725.3 L1775.5 724.7 L1777.0 725.5 L1778.5 725.2 L1780.0 725.3 L1781.5 725.5 L1783.0 725.5 L1784.5 725.5 L1786.0 724.4 L1787.5 725.2 L1789.0 725.1 L1790.5 724.8 L1792.0 724.0 L1793.5 725.5 L1795.0 725.5 L1796.5 725.4 L1798.0 724.2 L1799.5 725.2 L1800 727Z" fill="url(#tr)" opacity="0.95"/><path d="M1112.5 723.5 L1114.0 724.9 L1115.5 723.9 L1117.0 724.7 L1118.5 723.4 L1120.0 725.4 L1121.5 724.7 L1123.0 723.7 L1124.5 723.6 L1126.0 723.4 L1127.5 724.4 L1129.0 724.7 L1130.5 723.0 L1132.0 723.9 L1133.5 725.3 L1135.0 725.1 L1136.5 721.4 L1138.0 725.0 L1139.5 724.2 L1141.0 723.7 L1142.5 725.3 L1144.0 725.3 L1145.5 724.9 L1147.0 725.4 L1148.5 725.1 L1150.0 724.4 L1151.5 723.7 L1153.0 725.2 L1154.5 722.6 L1156.0 724.4 L1157.5 723.2 L1159.0 725.2 L1160.5 723.1 L1162.0 725.5 L1163.5 724.3 L1165.0 725.2 L1166.5 720.2 L1168.0 725.4 L1169.5 724.2 L1171.0 723.4 L1172.5 725.0 L1174.0 724.4 L1175.5 725.4 L1177.0 724.9 L1178.5 725.3 L1180.0 723.9 L1181.5 724.6 L1183.0 724.2 L1184.5 722.5 L1186.0 724.7 L1187.5 724.4 L1189.0 725.5 L1190.5 724.0 L1192.0 724.5 L1193.5 723.9 L1195.0 725.3 L1196.5 723.5 L1198.0 724.5 L1199.5 725.3 L1201.0 724.3 L1202.5 724.3 L1204.0 724.8 L1205.5 722.9 L1207.0 724.9 L1208.5 724.6 L1210.0 724.7 L1211.5 725.0 L1213.0 725.2 L1214.5 725.2 L1216.0 724.5 L1217.5 723.9 L1219.0 724.9 L1220.5 724.6 L1222.0 723.1 L1223.5 723.9 L1225.0 723.8 L1226.5 724.3 L1228.0 724.4 L1229.5 725.2 L1231.0 724.3 L1232.5 722.7 L1234.0 725.0 L1235.5 724.4 L1237.0 722.4 L1238.5 725.1 L1240.0 723.9 L1241.5 724.1 L1243.0 723.7 L1244.5 721.6 L1246.0 722.7 L1247.5 725.2 L1249.0 724.3 L1250.5 725.3 L1252.0 724.1 L1253.5 725.3 L1255.0 724.9 L1256.5 723.7 L1258.0 724.4 L1259.5 725.4 L1261.0 723.3 L1262.5 724.3 L1264.0 724.2 L1265.5 723.7 L1267.0 725.0 L1268.5 722.6 L1270.0 724.0 L1271.5 725.1 L1273.0 724.7 L1274.5 723.0 L1276.0 723.9 L1277.5 725.5 L1279.0 724.5 L1280.5 725.2 L1282.0 721.7 L1283.5 724.2 L1285.0 721.8 L1286.5 723.9 L1288.0 724.0 L1289.5 724.8 L1291.0 725.1 L1292.5 721.5 L1294.0 724.5 L1295.5 725.3 L1297.0 723.0 L1298.5 725.4 L1300.0 722.5 L1301.5 724.4 L1303.0 724.7 L1304.5 724.3 L1306.0 723.2 L1307.5 724.5 L1309.0 725.0 L1310.5 722.6 L1312.0 724.4 L1313.5 724.5 L1315.0 724.6 L1316.5 724.6 L1318.0 725.0 L1319.5 724.2 L1321.0 725.4 L1322.5 725.0 L1324.0 725.3 L1325.5 724.8 L1327.0 724.1 L1328.5 724.7 L1330.0 725.1 L1331.5 723.3 L1333.0 722.9 L1334.5 723.2 L1336.0 725.2 L1337.5 724.7 L1339.0 723.5 L1340.5 725.2 L1342.0 725.2 L1343.5 722.0 L1345.0 725.1 L1346.5 724.3 L1348.0 721.6 L1349.5 723.2 L1351.0 725.2 L1352.5 722.9 L1354.0 725.2 L1355.5 722.9 L1357.0 719.9 L1358.5 723.7 L1360.0 724.6 L1361.5 725.2 L1363.0 722.1 L1364.5 725.3 L1366.0 723.0 L1367.5 724.5 L1369.0 722.1 L1370.5 724.0 L1372.0 723.5 L1373.5 722.9 L1375.0 723.6 L1376.5 723.0 L1378.0 724.1 L1379.5 724.1 L1381.0 723.9 L1382.5 724.4 L1384.0 724.4 L1385.5 723.6 L1387.0 724.4 L1388.5 723.5 L1390.0 724.4 L1391.5 722.2 L1393.0 725.4 L1394.5 725.3 L1396.0 723.9 L1397.5 725.3 L1399.0 723.4 L1400.5 722.7 L1402.0 724.4 L1403.5 723.2 L1405.0 724.2 L1406.5 723.4 L1408.0 725.1 L1409.5 724.4 L1411.0 725.4 L1412.5 724.9 L1414.0 723.7 L1415.5 722.8 L1417.0 723.1 L1418.5 725.5 L1420.0 725.3 L1421.5 724.7 L1423.0 723.2 L1424.5 725.2 L1426.0 724.6 L1427.5 723.6 L1429.0 724.2 L1430.5 722.3 L1432.0 724.3 L1433.5 724.4 L1435.0 723.4 L1436.5 725.0 L1438.0 723.9 L1439.5 724.3 L1441.0 722.2 L1442.5 724.3 L1444.0 724.4 L1445.5 724.3 L1447.0 724.8 L1448.5 724.3 L1450.0 723.6 L1451.5 721.7 L1453.0 718.8 L1454.5 715.1 L1456.0 711.2 L1457.5 708.1 L1459.0 707.0 L1460.5 708.1 L1462.0 711.2 L1463.5 715.1 L1465.0 718.8 L1466.5 721.7 L1468.0 723.6 L1469.5 724.3 L1471.0 722.7 L1472.5 723.8 L1474.0 725.3 L1475.5 725.1 L1477.0 725.3 L1478.5 725.2 L1480.0 725.2 L1481.5 725.0 L1483.0 723.5 L1484.5 724.5 L1486.0 722.9 L1487.5 724.6 L1489.0 725.1 L1490.5 724.5 L1492.0 723.3 L1493.5 721.2 L1495.0 717.8 L1496.5 713.3 L1498.0 708.3 L1499.5 703.9 L1501.0 701.3 L1502.5 701.4 L1504.0 704.1 L1505.5 708.6 L1507.0 713.6 L1508.5 718.1 L1510.0 721.4 L1511.5 723.4 L1513.0 724.6 L1514.5 723.7 L1516.0 725.4 L1517.5 725.3 L1519.0 724.5 L1520.5 725.3 L1522.0 724.0 L1523.5 724.9 L1525.0 723.7 L1526.5 723.5 L1528.0 723.7 L1529.5 723.3 L1531.0 723.7 L1532.5 724.9 L1534.0 725.1 L1535.5 723.2 L1537.0 723.8 L1538.5 722.0 L1540.0 719.3 L1541.5 715.8 L1543.0 712.1 L1544.5 709.3 L1546.0 708.2 L1547.5 709.3 L1549.0 712.1 L1550.5 715.8 L1552.0 719.3 L1553.5 722.0 L1555.0 723.8 L1556.5 724.7 L1558.0 722.6 L1559.5 723.9 L1561.0 723.5 L1562.5 724.7 L1564.0 722.2 L1565.5 721.1 L1567.0 725.0 L1568.5 722.7 L1570.0 724.8 L1571.5 724.0 L1573.0 722.3 L1574.5 724.6 L1576.0 724.3 L1577.5 724.0 L1579.0 724.6 L1580.5 722.9 L1582.0 724.6 L1583.5 725.1 L1585.0 725.5 L1586.5 725.3 L1588.0 725.0 L1589.5 725.2 L1591.0 724.6 L1592.5 724.1 L1594.0 723.1 L1595.5 723.4 L1597.0 718.3 L1598.5 713.3 L1600.0 715.1 L1601.5 721.1 L1603.0 721.0 L1604.5 718.0 L1606.0 721.0 L1607.5 724.5 L1609.0 725.3 L1610.5 725.2 L1612.0 723.6 L1613.5 724.9 L1615.0 723.0 L1616.5 724.2 L1618.0 724.0 L1619.5 724.4 L1621.0 723.8 L1622.5 724.9 L1624.0 724.0 L1625.5 723.6 L1627.0 722.7 L1628.5 724.7 L1630.0 722.5 L1631.5 723.6 L1633.0 725.1 L1634.5 724.5 L1636.0 725.0 L1637.5 723.7 L1639.0 725.1 L1640.5 725.2 L1642.0 725.3 L1643.5 723.6 L1645.0 725.1 L1646.5 723.2 L1648.0 723.8 L1649.5 723.8 L1651.0 724.8 L1652.5 725.3 L1654.0 724.9 L1655.5 723.9 L1657.0 725.1 L1658.5 722.0 L1660.0 724.5 L1661.5 725.3 L1663.0 723.7 L1664.5 724.3 L1666.0 724.3 L1667.5 724.1 L1669.0 722.4 L1670.5 724.1 L1672.0 725.3 L1673.5 724.7 L1675.0 723.4 L1676.5 724.7 L1678.0 725.1 L1679.5 725.4 L1681.0 725.2 L1682.5 725.1 L1684.0 724.4 L1685.5 725.0 L1687.0 724.2 L1688.5 724.1 L1690.0 723.7 L1691.5 723.5 L1693.0 723.9 L1694.5 724.1 L1696.0 724.2 L1697.5 725.5 L1699.0 724.4 L1700.5 723.8 L1702.0 725.2 L1703.5 724.3 L1705.0 724.3 L1706.5 724.6 L1708.0 725.3 L1709.5 724.9 L1711.0 723.3 L1712.5 724.2 L1714.0 724.0 L1715.5 724.2 L1717.0 723.7 L1718.5 724.8 L1720.0 724.6 L1721.5 725.3 L1723.0 722.6 L1724.5 724.4 L1726.0 724.7 L1727.5 724.1 L1729.0 722.2 L1730.5 724.4 L1732.0 719.9 L1733.5 724.8 L1735.0 724.9 L1736.5 725.3 L1738.0 722.9 L1739.5 725.5 L1741.0 724.8 L1742.5 724.7 L1744.0 724.0 L1745.5 725.3 L1747.0 724.7 L1748.5 723.5 L1750.0 724.1 L1751.5 724.4 L1753.0 725.4 L1754.5 724.0 L1756.0 725.3 L1757.5 724.1 L1759.0 724.3 L1760.5 725.5 L1762.0 725.5 L1763.5 724.7 L1765.0 725.3 L1766.5 725.5 L1768.0 724.2 L1769.5 725.4 L1771.0 723.5 L1772.5 724.1 L1774.0 725.3 L1775.5 724.7 L1777.0 725.5 L1778.5 725.2 L1780.0 725.3 L1781.5 725.5 L1783.0 725.5 L1784.5 725.5 L1786.0 724.4 L1787.5 725.2 L1789.0 725.1 L1790.5 724.8 L1792.0 724.0 L1793.5 725.5 L1795.0 725.5 L1796.5 725.4 L1798.0 724.2 L1799.5 725.2" stroke="#a8f0e8" stroke-width="0.8" fill="none" opacity="0.8"/><rect x="1112.5" y="727" width="318.0" height="8" fill="#5b64d4"/><rect x="1430.5" y="727" width="147.5" height="8" fill="#4a86e6"/><rect x="1578" y="727" width="28.5" height="8" fill="#6a5cc8"/><rect x="1606.5" y="727" width="144" height="8" fill="#da5050"/><rect x="1750.5" y="727" width="50" height="8" fill="#7a2a30"/><rect x="1112.5" y="735" width="687.5" height="1.6" fill="#a5b7c8"/><rect x="1112.5" y="736.6" width="687.5" height="19.6" fill="#0e2939"/><rect x="1430.5" y="736.6" width="147.5" height="19.6" fill="#175173"/><rect x="1750.5" y="736.6" width="50" height="19.6" fill="#0a1e2a"/><path d="M1115 736.6 V756 M1164.1 736.6 V756 M1213.2 736.6 V756 M1262.3 736.6 V756 M1311.4 736.6 V756 M1360.5 736.6 V756 M1409.6 736.6 V756 M1458.7 736.6 V756 M1507.8 736.6 V756 M1556.9 736.6 V756 M1606 736.6 V756 M1655.1 736.6 V756 M1704.2 736.6 V756" stroke="#7fb0d0" stroke-opacity="0.18" stroke-width="1"/><rect x="1112.5" y="756" width="687.5" height="1.2" fill="#8898a8"/><rect x="1114.3" y="645" width="1.4" height="86" fill="#c8c850" opacity="0.8"/><rect x="1429.7" y="566" width="1.6" height="191" fill="#e8f060"/><path d="M1422 560 H1439 L1430.5 573Z" fill="#f2f22a"/></svg>
<span class="t" style="left:1113.90px;top:612.63px;font-size:14.5px;color:#d2d84c;transform:scaleX(0.9435);-webkit-text-stroke:0.35px #d2d84c;">RTTY</span>
<span class="t" style="left:1628.00px;top:570.29px;font-size:26px;color:#7f8e9b;transform:scaleX(1.0353);-webkit-text-stroke:0.5px #7f8e9b;">+24dB</span>
<span class="t" style="left:1766.80px;top:569.85px;font-size:14px;color:#fff;transform:scaleX(1.1073);-webkit-text-stroke:0.35px #fff;">-40</span>
<span class="t" style="left:1766.80px;top:611.55px;font-size:14px;color:#fff;transform:scaleX(1.1073);-webkit-text-stroke:0.35px #fff;">-60</span>
<span class="t" style="left:1766.80px;top:652.75px;font-size:14px;color:#fff;transform:scaleX(1.1073);-webkit-text-stroke:0.35px #fff;">-80</span>
<span class="t" style="left:1760.00px;top:693.95px;font-size:14px;color:#fff;transform:scaleX(1.0429);-webkit-text-stroke:0.35px #fff;">-100</span>
<span class="t" style="left:1096.50px;top:738.97px;font-size:13.5px;color:#fff;transform:scaleX(1.0793);-webkit-text-stroke:0.35px #fff;">3.590</span>
<span class="t" style="left:1194.80px;top:738.97px;font-size:13.5px;color:#fff;transform:scaleX(1.0705);-webkit-text-stroke:0.35px #fff;">3.592</span>
<span class="t" style="left:1292.40px;top:738.97px;font-size:13.5px;color:#fff;transform:scaleX(1.0882);-webkit-text-stroke:0.35px #fff;">3.594</span>
<span class="t" style="left:1390.50px;top:738.97px;font-size:13.5px;color:#fff;transform:scaleX(1.0852);-webkit-text-stroke:0.35px #fff;">3.596</span>
<span class="t" style="left:1490.00px;top:738.97px;font-size:13.5px;color:#c0dcef;transform:scaleX(1.0764);-webkit-text-stroke:0.35px #c0dcef;">3.598</span>
<span class="t" style="left:1587.60px;top:738.97px;font-size:13.5px;color:#fff;transform:scaleX(1.0675);-webkit-text-stroke:0.35px #fff;">3.600</span>
<span class="t" style="left:1685.70px;top:738.97px;font-size:13.5px;color:#fff;transform:scaleX(1.0734);-webkit-text-stroke:0.35px #fff;">3.602</span>
<span class="t" style="left:1781.40px;top:738.97px;font-size:13.5px;color:#8a96a0;transform:scaleX(1.1724);">3.6</span>
<div class="b" style="left:1059.5px;top:590px;width:53.0px;height:403.5px;background:#0b3a80"></div>
<div class="b" style="left:1059.5px;top:560px;width:53.0px;height:30px;background:#0f3c5a"></div>
<div class="b" style="left:1090px;top:581.6px;width:22.5px;height:1.2999999999999545px;background:rgba(127,176,208,.33)"></div>
<div class="b" style="left:1060px;top:560px;width:30px;height:30px;background:#a2abb4"></div>
<div class="b" style="left:1060px;top:560px;width:5px;height:30px;background:#7b848c"></div>
<svg class="b" style="left:1060px;top:560px" width="30" height="30"><path d="M6.9 15.3 L13 10 V12.8 H26.5 V17.8 H13 V20.6Z" fill="#0b3a80" stroke="#fff" stroke-width="1.1"/></svg>
<div class="b" style="left:1111.8px;top:590px;width:1.2000000000000455px;height:403.5px;background:#37598c"></div>
<div class="b" style="left:1059.5px;top:589.8px;width:53.0px;height:1.0px;background:#37598c"></div>
<div class="b" style="left:1059.5px;top:634.7px;width:52.5px;height:1.0px;background:#37598c"></div>
<div class="b" style="left:1059.5px;top:679.8px;width:52.5px;height:1.0px;background:#37598c"></div>
<div class="b" style="left:1059.5px;top:724.5px;width:52.5px;height:1.0px;background:#37598c"></div>
<div class="b" style="left:1059.5px;top:769.7px;width:52.5px;height:1.0px;background:#37598c"></div>
<div class="b" style="left:1059.5px;top:814.8px;width:52.5px;height:1.0px;background:#37598c"></div>
<div class="b" style="left:1059.5px;top:859.6px;width:52.5px;height:1.0px;background:#37598c"></div>
<div class="b" style="left:1059.5px;top:904.8px;width:52.5px;height:1.0px;background:#37598c"></div>
<div class="b" style="left:1059.5px;top:950.7px;width:52.5px;height:1.0px;background:#37598c"></div>
<div class="b" style="left:1059.5px;top:905.5px;width:52.299999999999955px;height:45.299999999999955px;background:#6e6e6e"></div>
<span class="t" style="left:1070.80px;top:604.56px;font-size:16px;color:#fff;font-weight:bold;transform:scaleX(0.9620);">+RX</span>
<span class="t" style="left:1065.90px;top:649.26px;font-size:16px;color:#fff;font-weight:bold;transform:scaleX(0.9409);">+Split</span>
<span class="t" style="left:1067.00px;top:693.96px;font-size:16px;color:#fff;font-weight:bold;transform:scaleX(0.9387);">+TNF</span>
<span class="t" style="left:1068.40px;top:738.96px;font-size:16px;color:#fff;font-weight:bold;transform:scaleX(0.8925);">Band</span>
<span class="t" style="left:1073.90px;top:783.96px;font-size:16px;color:#fff;font-weight:bold;transform:scaleX(0.9197);">BW</span>
<span class="t" style="left:1070.20px;top:829.46px;font-size:16px;color:#fff;font-weight:bold;transform:scaleX(0.9489);">ANT</span>
<span class="t" style="left:1070.20px;top:873.96px;font-size:16px;color:#fff;font-weight:bold;transform:scaleX(0.9151);">Disp</span>
<span class="t" style="left:1065.20px;top:920.18px;font-size:15.5px;color:#fff;transform:scaleX(0.8568);-webkit-text-stroke:0.45px #fff;">DAXIQ</span>
<span class="t" style="left:1064.70px;top:965.18px;font-size:15.5px;color:#fff;font-weight:bold;transform:scaleX(0.9201);">MEM</span>
<svg class="b" style="left:1098px;top:966px" width="12" height="14"><path d="M1 1 H5 L9.5 6.8 L5 12.6 H1Z" fill="#fff"/></svg>
<svg class="b" style="left:1112.5px;top:757.2px" width="687.5" height="236.29999999999995" viewBox="1112.5 757.2 687.5 236.29999999999995"><defs><filter id="sn" x="1112.5" y="757.2" width="687.5" height="236.29999999999995" filterUnits="userSpaceOnUse"><feTurbulence type="fractalNoise" baseFrequency="0.4 0.6" numOctaves="2" seed="5"/><feColorMatrix type="matrix" values="0 0 0 0 0.0  0 0 0 0 0.01  0 0 0 0 0.05  0 0 0 -2.6 1.72"/></filter><filter id="sb" x="-50%" y="-20%" width="200%" height="140%"><feGaussianBlur stdDeviation="2 1"/></filter></defs><rect x="1112.5" y="757.2" width="638.0" height="236.29999999999995" fill="#0b0f9e"/><rect x="1750.5" y="757.2" width="50" height="236.29999999999995" fill="#0a0f66"/><rect x="1112.5" y="757.2" width="687.5" height="236.29999999999995" filter="url(#sn)"/><rect x="1456.5" y="757.2" width="5" height="45.799999999999955" fill="#2858ff" opacity="0.72" filter="url(#sb)"/><rect x="1499.5" y="757.2" width="5" height="45.799999999999955" fill="#2858ff" opacity="0.80" filter="url(#sb)"/><rect x="1543.5" y="757.2" width="5" height="45.799999999999955" fill="#2858ff" opacity="0.72" filter="url(#sb)"/><rect x="1593.5" y="757.2" width="5" height="45.799999999999955" fill="#2858ff" opacity="0.28" filter="url(#sb)"/><rect x="1447.5" y="809.8" width="5" height="52.200000000000045" fill="#2858ff" opacity="0.48" filter="url(#sb)"/><rect x="1483.5" y="809.8" width="5" height="52.200000000000045" fill="#2858ff" opacity="0.64" filter="url(#sb)"/><rect x="1515.5" y="809.8" width="5" height="52.200000000000045" fill="#2858ff" opacity="0.48" filter="url(#sb)"/><rect x="1545.5" y="809.8" width="5" height="52.200000000000045" fill="#2858ff" opacity="0.56" filter="url(#sb)"/><rect x="1597.5" y="809.8" width="5" height="52.200000000000045" fill="#2858ff" opacity="0.24" filter="url(#sb)"/><rect x="1444.5" y="868.4" width="5" height="51.80000000000007" fill="#2858ff" opacity="0.40" filter="url(#sb)"/><rect x="1465.5" y="868.4" width="5" height="51.80000000000007" fill="#2858ff" opacity="0.48" filter="url(#sb)"/><rect x="1487.5" y="868.4" width="5" height="51.80000000000007" fill="#2858ff" opacity="0.64" filter="url(#sb)"/><rect x="1509.5" y="868.4" width="5" height="51.80000000000007" fill="#2858ff" opacity="0.48" filter="url(#sb)"/><rect x="1529.5" y="868.4" width="5" height="51.80000000000007" fill="#2858ff" opacity="0.56" filter="url(#sb)"/><rect x="1550.5" y="868.4" width="5" height="51.80000000000007" fill="#2858ff" opacity="0.48" filter="url(#sb)"/><rect x="1440.5" y="926.4" width="5" height="50.89999999999998" fill="#2858ff" opacity="0.40" filter="url(#sb)"/><rect x="1459.5" y="926.4" width="5" height="50.89999999999998" fill="#2858ff" opacity="0.48" filter="url(#sb)"/><rect x="1477.5" y="926.4" width="5" height="50.89999999999998" fill="#2858ff" opacity="0.48" filter="url(#sb)"/><rect x="1495.5" y="926.4" width="5" height="50.89999999999998" fill="#2858ff" opacity="0.56" filter="url(#sb)"/><rect x="1513.5" y="926.4" width="5" height="50.89999999999998" fill="#2858ff" opacity="0.48" filter="url(#sb)"/><rect x="1531.5" y="926.4" width="5" height="50.89999999999998" fill="#2858ff" opacity="0.48" filter="url(#sb)"/><rect x="1549.5" y="926.4" width="5" height="50.89999999999998" fill="#2858ff" opacity="0.48" filter="url(#sb)"/><rect x="1567.5" y="926.4" width="5" height="50.89999999999998" fill="#2858ff" opacity="0.32" filter="url(#sb)"/><rect x="1457.5" y="984.2" width="5" height="9.299999999999955" fill="#2858ff" opacity="0.48" filter="url(#sb)"/><rect x="1497.5" y="984.2" width="5" height="9.299999999999955" fill="#2858ff" opacity="0.48" filter="url(#sb)"/><rect x="1537.5" y="984.2" width="5" height="9.299999999999955" fill="#2858ff" opacity="0.48" filter="url(#sb)"/><rect x="1112.5" y="803" width="687.5" height="6.8" fill="#02041a"/><rect x="1112.5" y="801.8" width="638.0" height="1.2" fill="#2a6aff" opacity="0.35"/><rect x="1400" y="801.6" width="180" height="1.4" fill="#40c8ff" opacity="0.6" filter="url(#sb)"/><rect x="1450" y="801.2" width="110" height="1.8" fill="#90f070" opacity="0.8" filter="url(#sb)"/><rect x="1112.5" y="862" width="687.5" height="6.8" fill="#02041a"/><rect x="1112.5" y="860.8" width="638.0" height="1.2" fill="#2a6aff" opacity="0.35"/><rect x="1400" y="860.6" width="180" height="1.4" fill="#40c8ff" opacity="0.6" filter="url(#sb)"/><rect x="1450" y="860.2" width="110" height="1.8" fill="#90f070" opacity="0.8" filter="url(#sb)"/><rect x="1112.5" y="920.2" width="687.5" height="6.8" fill="#02041a"/><rect x="1112.5" y="919.0" width="638.0" height="1.2" fill="#2a6aff" opacity="0.35"/><rect x="1400" y="918.8000000000001" width="180" height="1.4" fill="#40c8ff" opacity="0.6" filter="url(#sb)"/><rect x="1450" y="918.4000000000001" width="110" height="1.8" fill="#90f070" opacity="0.8" filter="url(#sb)"/><rect x="1112.5" y="977.3" width="687.5" height="6.8" fill="#02041a"/><rect x="1112.5" y="976.0999999999999" width="638.0" height="1.2" fill="#2a6aff" opacity="0.35"/><rect x="1400" y="975.9" width="180" height="1.4" fill="#40c8ff" opacity="0.6" filter="url(#sb)"/><rect x="1450" y="975.5" width="110" height="1.8" fill="#90f070" opacity="0.8" filter="url(#sb)"/><rect x="1684" y="962.3" width="62" height="23.2" rx="2" fill="#6f6f6f"/></svg>
<span class="t" style="left:1768.30px;top:794.15px;font-size:14px;color:#fff;transform:scaleX(1.0740);-webkit-text-stroke:0.4px #fff;">-5s</span>
<span class="t" style="left:1761.80px;top:857.25px;font-size:14px;color:#fff;transform:scaleX(1.0062);-webkit-text-stroke:0.4px #fff;">-10s</span>
<span class="t" style="left:1761.80px;top:919.35px;font-size:14px;color:#fff;transform:scaleX(1.0062);-webkit-text-stroke:0.4px #fff;">-15s</span>
<span class="t" style="left:1697.32px;top:968.50px;font-size:13px;color:#fff;font-weight:bold;">-</span>
<span class="t" style="left:1725.31px;top:968.15px;font-size:14px;color:#fff;font-weight:bold;">+</span>
<svg class="b" style="left:1225.5px;top:570px" width="200" height="120" viewBox="1225.5 570 200 120"><defs><linearGradient id="sm" x1="0" x2="1"><stop offset="0" stop-color="#1c9a24"/><stop offset="0.55" stop-color="#44cc33"/><stop offset="1" stop-color="#e6ee3a"/></linearGradient></defs><rect x="1225.5" y="570" width="200" height="119.5" fill="#000"/><circle cx="1235.4" cy="580.2" r="6.3" fill="none" stroke="#8a8a8a" stroke-width="1.1"/><path d="M1231 575.8 L1239.8 584.6 M1239.8 575.8 L1231 584.6" stroke="#8a8a8a" stroke-width="1.1"/><rect x="1375.5" y="573.5" width="23" height="20" rx="3.5" fill="#e8192c"/><rect x="1404.5" y="573.5" width="16" height="20" rx="3.5" fill="#2b86bf"/><rect x="1233.9" y="620" width="96" height="9.7" fill="url(#sm)"/><path d="M1233.5 640 H1348.2" stroke="#3b8fc8" stroke-width="2"/><path d="M1348.2 640 H1418" stroke="#d83838" stroke-width="2"/><path d="M1233.7 639 V649.6" stroke="#3b8fc8" stroke-width="1.3"/><path d="M1256.4 639 V649.6" stroke="#3b8fc8" stroke-width="1.3"/><path d="M1279.5 639 V649.6" stroke="#3b8fc8" stroke-width="1.3"/><path d="M1302.4 639 V649.6" stroke="#3b8fc8" stroke-width="1.3"/><path d="M1325.4 639 V649.6" stroke="#3b8fc8" stroke-width="1.3"/><path d="M1348.2 639 V649.6" stroke="#d83838" stroke-width="1.3"/><path d="M1371.3 639 V649.6" stroke="#d83838" stroke-width="1.3"/><path d="M1394.3 639 V649.6" stroke="#d83838" stroke-width="1.3"/><path d="M1234 675 H1237.5 L1242.5 670.5 V684 L1237.5 679.5 H1234Z" fill="#3b8fc8"/><path d="M1244.5 674 Q1246.5 677.2 1244.5 680.5 M1247 672 Q1250.2 677.2 1247 682.5 M1249.5 670 Q1254 677.2 1249.5 684.5" stroke="#3b8fc8" stroke-width="1.4" fill="none"/><rect x="1257" y="673.5" width="9" height="9" fill="none" stroke="#2a6a98" stroke-width="1.3"/><path d="M1263.5 673.5 V670 A4 4 0 0 1 1271.5 670 V673" fill="none" stroke="#2a6a98" stroke-width="1.3"/></svg>
<span class="t" style="left:1248.00px;top:578.64px;font-size:12px;color:#3a9ad2;-webkit-text-stroke:0.2px #3a9ad2;">ANT1</span>
<span class="t" style="left:1287.70px;top:578.64px;font-size:12px;color:#e0283a;transform:scaleX(1.0176);-webkit-text-stroke:0.2px #e0283a;">ANT1</span>
<span class="t" style="left:1337.70px;top:578.64px;font-size:12px;color:#3a9ad2;transform:scaleX(1.0068);-webkit-text-stroke:0.2px #3a9ad2;">3K</span>
<span class="t" style="left:1377.75px;top:578.42px;font-size:12.5px;color:#fff;font-weight:bold;transform:scaleX(1.1562);">TX</span>
<span class="t" style="left:1407.25px;top:578.00px;font-size:13px;color:#000;font-weight:bold;transform:scaleX(1.1218);">A</span>
<span class="t" style="left:1233.70px;top:602.34px;font-size:12px;color:#fff;transform:scaleX(1.0400);-webkit-text-stroke:0.35px #fff;">DIGU</span>
<span class="t" style="left:1323.40px;top:598.72px;font-size:19px;color:#fff;transform:scaleX(1.0810);-webkit-text-stroke:0.45px #fff;">3.596.400</span>
<span class="t" style="left:1402.80px;top:618.76px;font-size:9.5px;color:#fff;font-weight:bold;transform:scaleX(1.0311);">S7</span>
<span class="t" style="left:1253.62px;top:654.33px;font-size:10px;color:#fff;-webkit-text-stroke:0.3px #fff;">1</span>
<span class="t" style="left:1276.72px;top:654.33px;font-size:10px;color:#fff;-webkit-text-stroke:0.3px #fff;">3</span>
<span class="t" style="left:1299.62px;top:654.33px;font-size:10px;color:#fff;-webkit-text-stroke:0.3px #fff;">5</span>
<span class="t" style="left:1322.62px;top:654.33px;font-size:10px;color:#fff;-webkit-text-stroke:0.3px #fff;">7</span>
<span class="t" style="left:1345.42px;top:654.33px;font-size:10px;color:#fff;-webkit-text-stroke:0.3px #fff;">9</span>
<span class="t" style="left:1362.83px;top:654.33px;font-size:10px;color:#fff;-webkit-text-stroke:0.3px #fff;">+20</span>
<span class="t" style="left:1385.83px;top:654.33px;font-size:10px;color:#fff;-webkit-text-stroke:0.3px #fff;">+40</span>
<span class="t" style="left:1276.00px;top:675.04px;font-size:12px;color:#555;font-weight:bold;transform:scaleX(1.0626);">NB NR ANF QSK</span>
<span class="t" style="left:1380.00px;top:675.04px;font-size:12px;color:#2a7ab8;transform:scaleX(1.0450);-webkit-text-stroke:0.25px #2a7ab8;">AGC-F</span>
</div></div>
</div></body></html>
